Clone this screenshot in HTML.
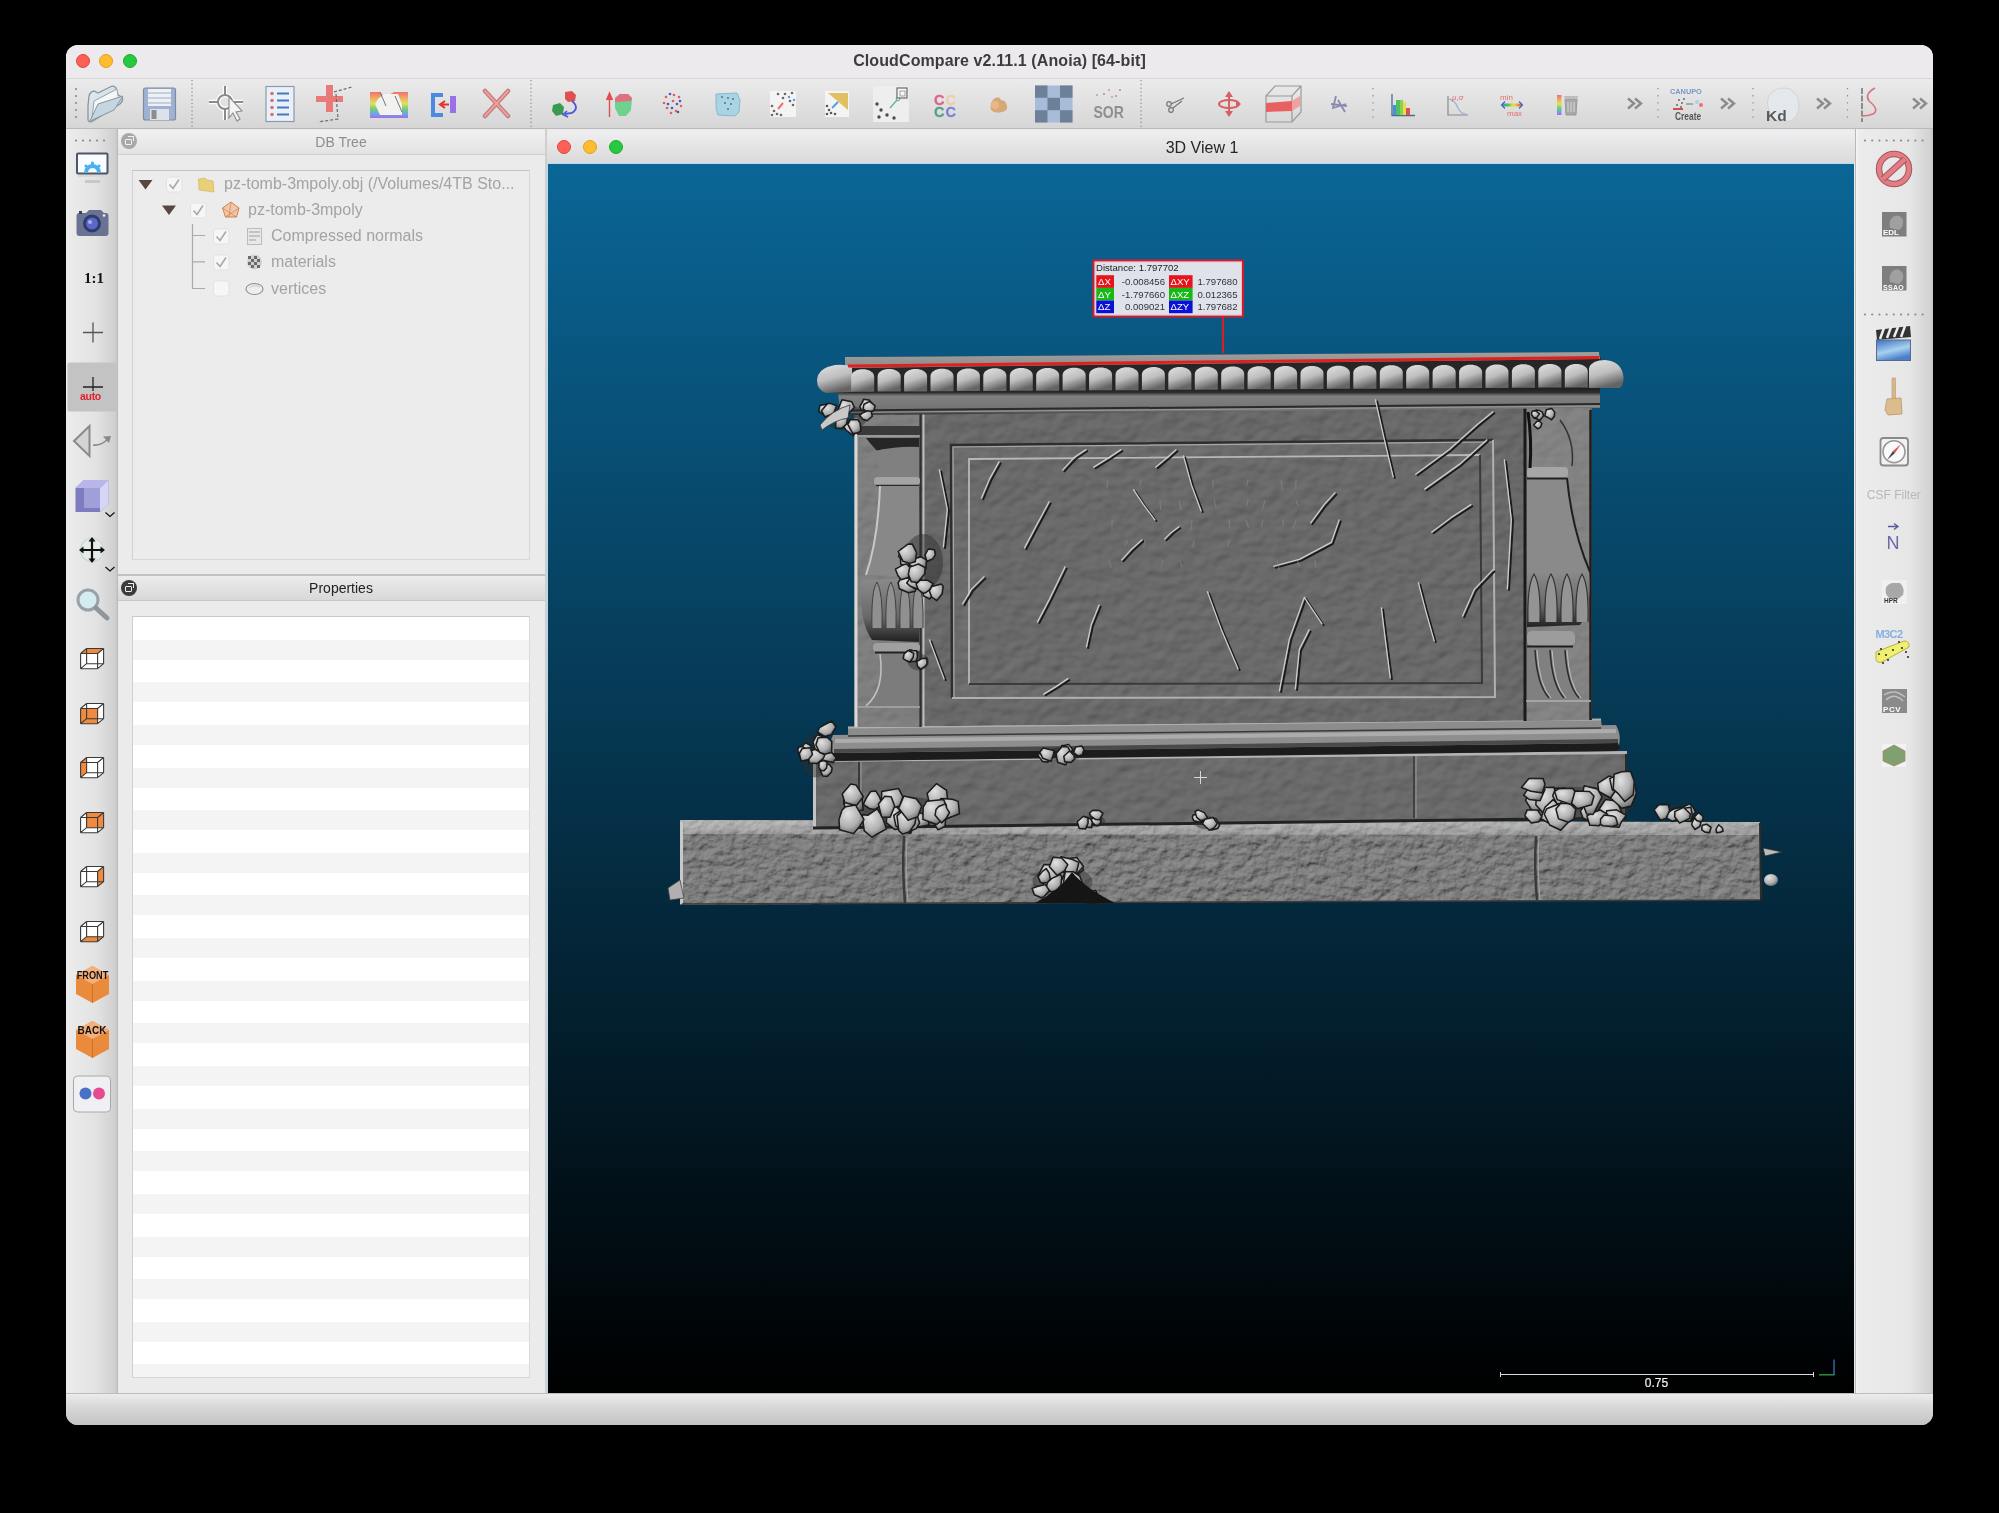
<!DOCTYPE html>
<html><head><meta charset="utf-8">
<style>
*{box-sizing:border-box;margin:0;padding:0}
html,body{width:1999px;height:1513px;overflow:hidden;background:#000;font-family:"Liberation Sans",sans-serif}
.a{position:absolute}
.hdr,#title .t,#vt .a{will-change:transform}
svg.a{will-change:transform}
#win{position:absolute;left:66px;top:45px;width:1867px;height:1380px;border-radius:12px;overflow:hidden;background:#ebebeb}
#title{left:0;top:0;width:1867px;height:34px;background:#eceaed;border-bottom:1px solid #d8d8d8}
#title .t{left:0;top:7px;width:1867px;text-align:center;font-size:16px;font-weight:bold;color:#3c3c3c;letter-spacing:0.1px}
.tl{position:absolute;width:14px;height:14px;border-radius:50%}
#tb{left:0;top:34px;width:1867px;height:50px;background:linear-gradient(#ebebeb,#d6d6d6);border-bottom:1px solid #b9b9b9}
#ltb{left:0;top:84px;width:52px;height:1264px;background:linear-gradient(90deg,#ececec 0%,#e2e2e2 60%,#cfcfcf 95%,#b8b8b8 100%)}
#rtb{left:1790px;top:84px;width:77px;height:1264px;background:linear-gradient(90deg,#f6f6f6 0,#ececec 3px,#e6e6e6 70%,#d2d2d2 96%,#c4c4c4 100%)}
#dock{left:52px;top:84px;width:427px;height:1264px;background:#ebebeb}
#status{left:0;top:1348px;width:1867px;height:32px;background:linear-gradient(#ececec,#d9d9d9 40%,#c4c4c4);border-top:1px solid #bdbdbd}
.hdr{position:absolute;left:0;width:427px;height:25px;font-size:14px;text-align:center;line-height:24px;padding-left:19px}
#view{left:479px;top:84px;width:1311px;height:1264px;background:#ececec;border-left:2px solid #cfcfcf;border-right:1px solid #b8b8b8}
#vt{left:0;top:2px;width:1308px;height:32px;background:linear-gradient(#efeef0,#dadada);border-radius:6px 6px 0 0}
#gl{left:0;top:34px;width:1307px;height:1230px;border-top:1px solid #b8dcef;border-left:1px solid #b8dcef;background:linear-gradient(#0a6697,#000 100%)}
.tx{position:absolute;font-size:16px;line-height:16px;color:#a3a3a3;white-space:nowrap;will-change:transform}
</style></head>
<body>
<div id="root" style="position:absolute;left:0;top:0;width:1999px;height:1513px">
<div id="win">
  <div id="title" class="a">
    <div class="tl" style="left:10px;top:9px;background:#fe5f57;border:1px solid #e0443e"></div>
    <div class="tl" style="left:33px;top:9px;background:#febc2e;border:1px solid #dea123"></div>
    <div class="tl" style="left:57px;top:9px;background:#28c840;border:1px solid #1aab29"></div>
    <div class="a t">CloudCompare v2.11.1 (Anoia) [64-bit]</div>
  </div>
  <div id="tb" class="a"></div>
  <div id="ltb" class="a"></div>
  <div id="dock" class="a">
    <div class="hdr" style="top:1px;background:linear-gradient(#f1f1f1,#e3e3e3);color:#8e8e8e;border-bottom:1px solid #cfcfcf">DB Tree</div>
    <div class="a" style="left:3px;top:4px;width:16px;height:16px;border-radius:50%;background:#a8a8a8"></div>
    <div class="a" style="left:7px;top:10px;width:7px;height:6px;border:1.5px solid #f0f0f0;border-radius:1px"></div>
    <div class="a" style="left:10px;top:7px;width:6px;height:5px;border-top:1.5px solid #f0f0f0;border-right:1.5px solid #f0f0f0"></div>
    <div class="a" style="left:14px;top:41px;width:398px;height:390px;background:#ececec;border-top:1px solid #c4c4c4;border-left:1px solid #d0d0d0;border-right:1px solid #d8d8d8;border-bottom:1px solid #d8d8d8"></div>
    <div class="a" style="left:0;top:445px;width:427px;height:2px;background:#c2c2c2"></div>
    <div class="hdr" style="top:447px;background:linear-gradient(#ececec,#d8d8d8);color:#222;border-bottom:1px solid #c8c8c8">Properties</div>
    <div class="a" style="left:3px;top:451px;width:16px;height:16px;border-radius:50%;background:#3c3c3c"></div>
    <div class="a" style="left:7px;top:457px;width:7px;height:6px;border:1.5px solid #f0f0f0;border-radius:1px"></div>
    <div class="a" style="left:10px;top:454px;width:6px;height:5px;border-top:1.5px solid #f0f0f0;border-right:1.5px solid #f0f0f0"></div>
    <div class="a" style="left:14px;top:487px;width:398px;height:762px;border-top:1px solid #c8c8c8;border-left:1px solid #d0d0d0;border-right:1px solid #dadada;border-bottom:1px solid #d4d4d4;background:repeating-linear-gradient(#fff 0,#fff 22.6px,#f4f4f4 22.6px,#f4f4f4 42.64px)"></div>
  </div>
  <div id="view" class="a">
    <div id="vt" class="a">
      <div class="tl" style="left:10px;top:9px;background:#fe5f57;border:1px solid #e0443e"></div>
      <div class="tl" style="left:36px;top:9px;background:#febc2e;border:1px solid #dea123"></div>
      <div class="tl" style="left:62px;top:9px;background:#28c840;border:1px solid #1aab29"></div>
      <div class="a" style="left:0;top:7.5px;width:1310px;text-align:center;font-size:16px;color:#262626">3D View 1</div>
    </div>
    <div id="gl" class="a"></div>
  </div>
  <div id="rtb" class="a"></div>
  <div id="status" class="a"></div>
</div>
  <div class="tree a" style="left:0;top:0">
    <div class="tx" style="left:224px;top:176.3px">pz-tomb-3mpoly.obj (/Volumes/4TB Sto...</div>
    <div class="tx" style="left:247.5px;top:202.3px">pz-tomb-3mpoly</div>
    <div class="tx" style="left:271px;top:228px">Compressed normals</div>
    <div class="tx" style="left:271px;top:254.3px">materials</div>
    <div class="tx" style="left:271px;top:280.5px">vertices</div>
  </div>
<svg class="a" style="left:0;top:0" width="1999" height="1513" viewBox="0 0 1999 1513">
<defs>
<linearGradient id="gTop" x1="0" y1="0" x2="0" y2="1"><stop offset="0" stop-color="#a0a0a0"/><stop offset="1" stop-color="#8a8a8a"/></linearGradient>
<linearGradient id="gLobe" x1="0" y1="0" x2="0.35" y2="1"><stop offset="0" stop-color="#e2e2e2"/><stop offset="0.55" stop-color="#bebebe"/><stop offset="1" stop-color="#646464"/></linearGradient>
<linearGradient id="gTorus" x1="0" y1="0" x2="0" y2="1"><stop offset="0" stop-color="#8c8c8c"/><stop offset="0.35" stop-color="#9c9c9c"/><stop offset="0.62" stop-color="#6a6a6a"/><stop offset="0.8" stop-color="#262626"/><stop offset="1" stop-color="#141414"/></linearGradient>
<linearGradient id="gBaseTop" x1="0" y1="0" x2="0" y2="1"><stop offset="0" stop-color="#b4b4b4"/><stop offset="1" stop-color="#989898"/></linearGradient>
<linearGradient id="gArch" x1="0" y1="0" x2="0" y2="1"><stop offset="0" stop-color="#161616"/><stop offset="0.22" stop-color="#2e2e2e"/><stop offset="0.35" stop-color="#808080"/><stop offset="0.85" stop-color="#727272"/><stop offset="1" stop-color="#2a2a2a"/></linearGradient>
<linearGradient id="gVaseL" x1="0" y1="0" x2="0" y2="1"><stop offset="0" stop-color="#8a8a8a"/><stop offset="0.6" stop-color="#6a6a6a"/><stop offset="1" stop-color="#202020"/></linearGradient>
<radialGradient id="gDeb" cx="0.35" cy="0.3" r="0.85"><stop offset="0" stop-color="#e2e2e2"/><stop offset="0.55" stop-color="#b0b0b0"/><stop offset="1" stop-color="#505050"/></radialGradient>
<filter id="rough" x="-2%" y="-2%" width="104%" height="104%">
  <feTurbulence type="fractalNoise" baseFrequency="0.09 0.11" numOctaves="4" seed="11" result="noise"/>
  <feDiffuseLighting in="noise" lighting-color="#fff" surfaceScale="1.9" diffuseConstant="1" result="light"><feDistantLight azimuth="235" elevation="55"/></feDiffuseLighting>
  <feComposite in="SourceGraphic" in2="light" operator="arithmetic" k1="0" k2="1" k3="0.45" k4="-0.36" result="comb"/>
  <feComposite in="comb" in2="SourceGraphic" operator="in"/>
</filter>
<filter id="smooth" x="-2%" y="-2%" width="104%" height="104%">
  <feTurbulence type="fractalNoise" baseFrequency="0.06 0.08" numOctaves="2" seed="5" result="noise"/>
  <feDiffuseLighting in="noise" lighting-color="#fff" surfaceScale="1.6" diffuseConstant="1" result="light"><feDistantLight azimuth="235" elevation="60"/></feDiffuseLighting>
  <feComposite in="SourceGraphic" in2="light" operator="arithmetic" k1="0" k2="1" k3="0.22" k4="-0.19" result="comb"/>
  <feComposite in="comb" in2="SourceGraphic" operator="in"/>
</filter>
<filter id="soft" x="-5%" y="-5%" width="110%" height="110%"><feGaussianBlur stdDeviation="0.55"/></filter>
</defs>
<g filter="url(#rough)">
<polygon points="680.0,820.0 1760.0,822.0 1762.0,900.0 680.0,905.0" fill="#7a7a7a"/>
<polygon points="680.0,820.0 1760.0,822.0 1760.0,835.0 680.0,834.0" fill="url(#gBaseTop)"/>
</g>
<line x1="681.5" y1="822" x2="681.5" y2="904" stroke="#c8c8c8" stroke-width="3"/>
<path d="M904,836 Q902,870 905,903" stroke="#3a3a3a" stroke-width="2.5" fill="none"/><path d="M907,838 Q905,870 908,902" stroke="#a0a0a0" stroke-width="1.2" fill="none"/>
<path d="M1536,836 Q1534,868 1537,900" stroke="#3a3a3a" stroke-width="2.5" fill="none"/><path d="M1539,836 Q1537,868 1540,900" stroke="#a0a0a0" stroke-width="1.2" fill="none"/>
<line x1="1760" y1="823" x2="1761" y2="900" stroke="#2a2a2a" stroke-width="2"/>
<line x1="682" y1="904" x2="1760" y2="900" stroke="#3a3a3a" stroke-width="1.5"/>
<g filter="url(#smooth)">
<polygon points="813.0,760.0 1627.0,752.0 1627.0,818.0 813.0,829.0" fill="#6a6a6a"/>
</g>
<line x1="814.5" y1="761" x2="814.5" y2="828" stroke="#c4c4c4" stroke-width="3"/>
<line x1="1626" y1="753" x2="1626" y2="818" stroke="#2a2a2a" stroke-width="2"/>
<line x1="859" y1="762" x2="859" y2="828" stroke="#333" stroke-width="1.8"/><line x1="861" y1="762" x2="861" y2="828" stroke="#9a9a9a" stroke-width="1"/>
<line x1="1414" y1="755" x2="1414" y2="818" stroke="#383838" stroke-width="1.6"/><line x1="1416" y1="755" x2="1416" y2="818" stroke="#9a9a9a" stroke-width="1"/>
<line x1="813" y1="760.5" x2="1627" y2="752.5" stroke="#b4b4b4" stroke-width="3"/>
<line x1="813" y1="828" x2="1627" y2="818" stroke="#222" stroke-width="3"/>
<path d="M833,735 L1616,725 Q1623,738 1617,751 L835,761 Q826,748 833,735 Z" fill="#8e8e8e"/>
<polygon points="848,727 1601,719 1602,728 848,737" fill="#8c8c8c"/>
<line x1="848" y1="727.5" x2="1601" y2="719.5" stroke="#b0b0b0" stroke-width="2"/>
<line x1="848" y1="736" x2="1601" y2="728" stroke="#3a3a3a" stroke-width="1.5"/>
<line x1="835" y1="741" x2="1616" y2="731" stroke="#acacac" stroke-width="4"/>
<polygon points="834,753 1618,743 1620,748 1617,751 835,761 829,757" fill="#1c1c1c"/>
<polygon points="834,749 1618,739 1618,743 834,753" fill="#4a4a4a"/>
<g filter="url(#smooth)">
<polygon points="854.0,414.0 1592.0,407.0 1592.0,720.0 854.0,727.0" fill="#686868"/>
<polygon points="856.0,414.0 921.0,413.0 921.0,727.0 856.0,727.0" fill="#7e7e7e"/>
<polygon points="1526.0,408.0 1590.0,407.0 1590.0,720.0 1526.0,721.0" fill="#828282"/>
<polygon points="951.0,445.0 1493.0,440.0 1495.0,697.0 952.0,698.0" fill="#6c6c6c"/>
<polygon points="969.0,459.0 1480.0,455.0 1482.0,683.0 969.0,684.0" fill="#696969"/>
</g>
<line x1="856" y1="418" x2="856" y2="727" stroke="#d8d8d8" stroke-width="3"/>
<line x1="1590.5" y1="410" x2="1590.5" y2="720" stroke="#1e1e1e" stroke-width="2.5"/>
<line x1="923.5" y1="414" x2="923.5" y2="727" stroke="#bcbcbc" stroke-width="2"/>
<line x1="920.5" y1="414" x2="920.5" y2="727" stroke="#2e2e2e" stroke-width="2.2"/>
<line x1="1525" y1="408" x2="1525" y2="721" stroke="#1a1a1a" stroke-width="3"/>
<polyline points="952.0,698.0 951.0,445.0 1493.0,440.0" fill="none" stroke="#2e2e2e" stroke-width="2.5"/>
<polyline points="954.0,697.0 953.0,447.0 1492.0,442.0" fill="none" stroke="#a8a8a8" stroke-width="1.2"/>
<polyline points="1493.0,440.0 1495.0,697.0 952.0,698.0" fill="none" stroke="#b0b0b0" stroke-width="2"/>
<polyline points="969.0,684.0 969.0,459.0 1480.0,455.0" fill="none" stroke="#b8b8b8" stroke-width="1.8"/>
<polyline points="1480.0,455.0 1482.0,683.0 969.0,684.0" fill="none" stroke="#3a3a3a" stroke-width="2"/>
<rect x="857" y="426" width="63" height="9" fill="#3a3a3a"/><line x1="857" y1="436" x2="920" y2="436" stroke="#a0a0a0" stroke-width="1.5"/>
<path d="M866,438 L919,438 L919,450 Q898,447 882,456 Q872,446 866,438 Z" fill="#262626"/>
<path d="M870,452 Q893,446 919,447 L919,478 L880,479 Q882,465 870,452 Z" fill="#808080"/>
<rect x="874" y="477" width="46" height="8" rx="3.5" fill="#a4a4a4"/><line x1="876" y1="485.5" x2="919" y2="485.5" stroke="#2a2a2a" stroke-width="1.5"/>
<path d="M880,486 Q878,540 866,575 L919,577 L919,486 Z" fill="#888888"/>
<path d="M880,486 Q878,540 866,575" stroke="#c8c8c8" stroke-width="2" fill="none"/>
<path d="M862,580 Q858,620 872,640 L919,642 L919,578 Z" fill="url(#gVaseL)"/>
<path d="M872,628 Q871,590 877,582 Q883,592 882,628" fill="#909090" stroke="#404040" stroke-width="1"/>
<path d="M886,628 Q885,590 891,582 Q897,592 896,628" fill="#909090" stroke="#404040" stroke-width="1"/>
<path d="M900,628 Q899,590 905,582 Q911,592 910,628" fill="#909090" stroke="#404040" stroke-width="1"/>
<path d="M913,628 Q912,590 918,582 Q924,592 923,628" fill="#909090" stroke="#404040" stroke-width="1"/>
<rect x="873" y="643" width="47" height="9" rx="4" fill="#a0a0a0"/><line x1="875" y1="652.5" x2="919" y2="652.5" stroke="#222" stroke-width="1.8"/>
<path d="M880,654 Q885,690 866,706 L919,706 L919,654 Z" fill="#7c7c7c"/>
<path d="M880,654 Q885,690 866,706" stroke="#c0c0c0" stroke-width="1.6" fill="none"/>
<line x1="858" y1="707" x2="920" y2="707" stroke="#a8a8a8" stroke-width="1.5"/>
<path d="M1527,472 L1567,471 Q1570,520 1589,570 L1589,576 L1527,577 Z" fill="#8a8a8a"/>
<path d="M1567,478 Q1572,530 1590,572" stroke="#1e1e1e" stroke-width="2" fill="none"/>
<rect x="1527" y="467" width="41" height="11" rx="4" fill="#a6a6a6"/><line x1="1527" y1="478.5" x2="1567" y2="478.5" stroke="#222" stroke-width="1.8"/>
<path d="M1528,412 Q1532,440 1530,468" stroke="#111" stroke-width="3" fill="none"/>
<path d="M1560,420 Q1575,440 1572,466" stroke="#333" stroke-width="1.5" fill="none"/>
<path d="M1527,573 L1589,572 Q1592,610 1580,625 L1527,627 Z" fill="url(#gVaseL)"/>
<path d="M1528,622 Q1527,585 1534,574 Q1541,585 1540,622" fill="#949494" stroke="#333" stroke-width="1.2"/>
<path d="M1545,622 Q1544,585 1551,574 Q1558,585 1557,622" fill="#949494" stroke="#333" stroke-width="1.2"/>
<path d="M1561,622 Q1560,585 1567,574 Q1574,585 1573,622" fill="#949494" stroke="#333" stroke-width="1.2"/>
<path d="M1576,622 Q1575,585 1582,574 Q1589,585 1588,622" fill="#949494" stroke="#333" stroke-width="1.2"/>
<rect x="1527" y="631" width="48" height="15" rx="5" fill="#9c9c9c"/><line x1="1527" y1="646.5" x2="1573" y2="646.5" stroke="#1e1e1e" stroke-width="2.2"/>
<path d="M1527,648 L1565,648 Q1568,690 1590,700 L1590,702 L1527,702 Z" fill="#808080"/>
<path d="M1535,650 Q1537,685 1549,698" stroke="#2a2a2a" stroke-width="1.5" fill="none"/><path d="M1537,650 Q1539,685 1551,698" stroke="#c0c0c0" stroke-width="1" fill="none"/>
<path d="M1550,650 Q1552,685 1564,698" stroke="#2a2a2a" stroke-width="1.5" fill="none"/><path d="M1552,650 Q1554,685 1566,698" stroke="#c0c0c0" stroke-width="1" fill="none"/>
<path d="M1565,650 Q1567,685 1579,698" stroke="#2a2a2a" stroke-width="1.5" fill="none"/><path d="M1567,650 Q1569,685 1581,698" stroke="#c0c0c0" stroke-width="1" fill="none"/>
<line x1="1526" y1="701" x2="1591" y2="701" stroke="#b0b0b0" stroke-width="1.6"/>
<polygon points="838.0,392.0 1600.0,386.0 1600.0,408.0 856.0,415.0 840.0,413.0" fill="url(#gArch)"/>
<line x1="845" y1="410.5" x2="1600" y2="404" stroke="#2a2a2a" stroke-width="2"/>
<line x1="845" y1="412.5" x2="1600" y2="406" stroke="#9a9a9a" stroke-width="1"/>
<polygon points="845.0,357.0 1599.0,352.0 1601.0,360.0 1612.0,362.0 1620.0,388.0 826.0,393.0 830.0,368.0 845.0,366.0" fill="#262626"/>
<polygon points="845.0,357.0 1599.0,352.0 1600.0,359.0 845.0,368.0" fill="url(#gTop)"/>
<path d="M852,392 L826,393 Q817,390 817,380 Q818,368 835,365 Q848,364 852,368 Z" fill="url(#gLobe)"/>
<path d="M1589,388 L1589,368 Q1592,360 1605,360 Q1620,361 1623,374 Q1625,383 1620,388 Z" fill="url(#gLobe)"/>
<g fill="url(#gLobe)">
<path d="M851.2,391.8 L851.2,376.8 C851.2,366.8 874.2,366.8 874.2,376.8 L874.2,391.8 Z"/>
<path d="M877.6,391.6 L877.6,376.6 C877.6,366.6 900.7,366.6 900.7,376.6 L900.7,391.6 Z"/>
<path d="M904.1,391.5 L904.1,376.4 C904.1,366.4 927.1,366.4 927.1,376.4 L927.1,391.5 Z"/>
<path d="M930.5,391.3 L930.5,376.2 C930.5,366.2 953.5,366.2 953.5,376.2 L953.5,391.3 Z"/>
<path d="M956.9,391.1 L956.9,376.0 C956.9,366.0 979.9,366.0 979.9,376.0 L979.9,391.1 Z"/>
<path d="M983.3,391.0 L983.3,375.8 C983.3,365.8 1006.4,365.8 1006.4,375.8 L1006.4,391.0 Z"/>
<path d="M1009.8,390.8 L1009.8,375.6 C1009.8,365.6 1032.8,365.6 1032.8,375.6 L1032.8,390.8 Z"/>
<path d="M1036.2,390.7 L1036.2,375.4 C1036.2,365.4 1059.2,365.4 1059.2,375.4 L1059.2,390.7 Z"/>
<path d="M1062.6,390.5 L1062.6,375.2 C1062.6,365.2 1085.7,365.2 1085.7,375.2 L1085.7,390.5 Z"/>
<path d="M1089.1,390.3 L1089.1,375.0 C1089.1,365.0 1112.1,365.0 1112.1,375.0 L1112.1,390.3 Z"/>
<path d="M1115.5,390.2 L1115.5,374.8 C1115.5,364.8 1138.5,364.8 1138.5,374.8 L1138.5,390.2 Z"/>
<path d="M1141.9,390.0 L1141.9,374.6 C1141.9,364.6 1164.9,364.6 1164.9,374.6 L1164.9,390.0 Z"/>
<path d="M1168.3,389.8 L1168.3,374.4 C1168.3,364.4 1191.4,364.4 1191.4,374.4 L1191.4,389.8 Z"/>
<path d="M1194.8,389.7 L1194.8,374.2 C1194.8,364.2 1217.8,364.2 1217.8,374.2 L1217.8,389.7 Z"/>
<path d="M1221.2,389.5 L1221.2,374.0 C1221.2,364.0 1244.2,364.0 1244.2,374.0 L1244.2,389.5 Z"/>
<path d="M1247.6,389.3 L1247.6,373.8 C1247.6,363.8 1270.7,363.8 1270.7,373.8 L1270.7,389.3 Z"/>
<path d="M1274.1,389.2 L1274.1,373.6 C1274.1,363.6 1297.1,363.6 1297.1,373.6 L1297.1,389.2 Z"/>
<path d="M1300.5,389.0 L1300.5,373.4 C1300.5,363.4 1323.5,363.4 1323.5,373.4 L1323.5,389.0 Z"/>
<path d="M1326.9,388.8 L1326.9,373.2 C1326.9,363.2 1349.9,363.2 1349.9,373.2 L1349.9,388.8 Z"/>
<path d="M1353.3,388.7 L1353.3,373.0 C1353.3,363.0 1376.4,363.0 1376.4,373.0 L1376.4,388.7 Z"/>
<path d="M1379.8,388.5 L1379.8,372.8 C1379.8,362.8 1402.8,362.8 1402.8,372.8 L1402.8,388.5 Z"/>
<path d="M1406.2,388.4 L1406.2,372.6 C1406.2,362.6 1429.2,362.6 1429.2,372.6 L1429.2,388.4 Z"/>
<path d="M1432.6,388.2 L1432.6,372.4 C1432.6,362.4 1455.7,362.4 1455.7,372.4 L1455.7,388.2 Z"/>
<path d="M1459.1,388.0 L1459.1,372.2 C1459.1,362.2 1482.1,362.2 1482.1,372.2 L1482.1,388.0 Z"/>
<path d="M1485.5,387.9 L1485.5,372.0 C1485.5,362.0 1508.5,362.0 1508.5,372.0 L1508.5,387.9 Z"/>
<path d="M1511.9,387.7 L1511.9,371.8 C1511.9,361.8 1534.9,361.8 1534.9,371.8 L1534.9,387.7 Z"/>
<path d="M1538.3,387.5 L1538.3,371.6 C1538.3,361.6 1561.4,361.6 1561.4,371.6 L1561.4,387.5 Z"/>
<path d="M1564.8,387.4 L1564.8,371.4 C1564.8,361.4 1587.8,361.4 1587.8,371.4 L1587.8,387.4 Z"/>
</g>
<path d="M1025,549 L1035,530 L1050,502" stroke="#1a1a1a" stroke-width="1.9" fill="none" stroke-linejoin="round" transform="translate(1,0.8)"/><path d="M1025,549 L1035,530 L1050,502" stroke="#cdcdcd" stroke-width="1.3" fill="none" stroke-linejoin="round" transform="translate(-0.7,-0.6)"/>
<path d="M1038,623 L1050,600 L1066,567" stroke="#1a1a1a" stroke-width="1.9" fill="none" stroke-linejoin="round" transform="translate(1,0.8)"/><path d="M1038,623 L1050,600 L1066,567" stroke="#cdcdcd" stroke-width="1.3" fill="none" stroke-linejoin="round" transform="translate(-0.7,-0.6)"/>
<path d="M982,499 L990,480 L1000,462" stroke="#1a1a1a" stroke-width="1.9" fill="none" stroke-linejoin="round" transform="translate(1,0.8)"/><path d="M982,499 L990,480 L1000,462" stroke="#cdcdcd" stroke-width="1.3" fill="none" stroke-linejoin="round" transform="translate(-0.7,-0.6)"/>
<path d="M1063,471 L1075,458 L1087,450" stroke="#1a1a1a" stroke-width="1.9" fill="none" stroke-linejoin="round" transform="translate(1,0.8)"/><path d="M1063,471 L1075,458 L1087,450" stroke="#cdcdcd" stroke-width="1.3" fill="none" stroke-linejoin="round" transform="translate(-0.7,-0.6)"/>
<path d="M1094,468 L1110,458 L1122,450" stroke="#1a1a1a" stroke-width="1.9" fill="none" stroke-linejoin="round" transform="translate(1,0.8)"/><path d="M1094,468 L1110,458 L1122,450" stroke="#cdcdcd" stroke-width="1.3" fill="none" stroke-linejoin="round" transform="translate(-0.7,-0.6)"/>
<path d="M1156,521 L1144,505 L1134,490" stroke="#1a1a1a" stroke-width="1.9" fill="none" stroke-linejoin="round" transform="translate(1,0.8)"/><path d="M1156,521 L1144,505 L1134,490" stroke="#cdcdcd" stroke-width="1.3" fill="none" stroke-linejoin="round" transform="translate(-0.7,-0.6)"/>
<path d="M1156,468 L1168,458 L1177,450" stroke="#1a1a1a" stroke-width="1.9" fill="none" stroke-linejoin="round" transform="translate(1,0.8)"/><path d="M1156,468 L1168,458 L1177,450" stroke="#cdcdcd" stroke-width="1.3" fill="none" stroke-linejoin="round" transform="translate(-0.7,-0.6)"/>
<path d="M1184,456 L1192,485 L1202,512" stroke="#1a1a1a" stroke-width="1.9" fill="none" stroke-linejoin="round" transform="translate(1,0.8)"/><path d="M1184,456 L1192,485 L1202,512" stroke="#cdcdcd" stroke-width="1.3" fill="none" stroke-linejoin="round" transform="translate(-0.7,-0.6)"/>
<path d="M1208,592 L1222,630 L1239,670" stroke="#1a1a1a" stroke-width="1.9" fill="none" stroke-linejoin="round" transform="translate(1,0.8)"/><path d="M1208,592 L1222,630 L1239,670" stroke="#cdcdcd" stroke-width="1.3" fill="none" stroke-linejoin="round" transform="translate(-0.7,-0.6)"/>
<path d="M1280,692 L1290,640 L1305,598 L1323,625" stroke="#1a1a1a" stroke-width="1.9" fill="none" stroke-linejoin="round" transform="translate(1,0.8)"/><path d="M1280,692 L1290,640 L1305,598 L1323,625" stroke="#cdcdcd" stroke-width="1.3" fill="none" stroke-linejoin="round" transform="translate(-0.7,-0.6)"/>
<path d="M1296,690 L1300,650 L1310,630" stroke="#1a1a1a" stroke-width="1.9" fill="none" stroke-linejoin="round" transform="translate(1,0.8)"/><path d="M1296,690 L1300,650 L1310,630" stroke="#cdcdcd" stroke-width="1.3" fill="none" stroke-linejoin="round" transform="translate(-0.7,-0.6)"/>
<path d="M1311,524 L1325,505 L1336,493" stroke="#1a1a1a" stroke-width="1.9" fill="none" stroke-linejoin="round" transform="translate(1,0.8)"/><path d="M1311,524 L1325,505 L1336,493" stroke="#cdcdcd" stroke-width="1.3" fill="none" stroke-linejoin="round" transform="translate(-0.7,-0.6)"/>
<path d="M1274,567 L1300,560 L1332,543 L1340,520" stroke="#1a1a1a" stroke-width="1.9" fill="none" stroke-linejoin="round" transform="translate(1,0.8)"/><path d="M1274,567 L1300,560 L1332,543 L1340,520" stroke="#cdcdcd" stroke-width="1.3" fill="none" stroke-linejoin="round" transform="translate(-0.7,-0.6)"/>
<path d="M1416,475 L1450,450 L1478,425 L1494,412" stroke="#1a1a1a" stroke-width="1.9" fill="none" stroke-linejoin="round" transform="translate(1,0.8)"/><path d="M1416,475 L1450,450 L1478,425 L1494,412" stroke="#cdcdcd" stroke-width="1.3" fill="none" stroke-linejoin="round" transform="translate(-0.7,-0.6)"/>
<path d="M1425,490 L1460,465 L1488,440" stroke="#1a1a1a" stroke-width="1.9" fill="none" stroke-linejoin="round" transform="translate(1,0.8)"/><path d="M1425,490 L1460,465 L1488,440" stroke="#cdcdcd" stroke-width="1.3" fill="none" stroke-linejoin="round" transform="translate(-0.7,-0.6)"/>
<path d="M1432,533 L1452,518 L1472,505" stroke="#1a1a1a" stroke-width="1.9" fill="none" stroke-linejoin="round" transform="translate(1,0.8)"/><path d="M1432,533 L1452,518 L1472,505" stroke="#cdcdcd" stroke-width="1.3" fill="none" stroke-linejoin="round" transform="translate(-0.7,-0.6)"/>
<path d="M1463,617 L1475,590 L1494,570" stroke="#1a1a1a" stroke-width="1.9" fill="none" stroke-linejoin="round" transform="translate(1,0.8)"/><path d="M1463,617 L1475,590 L1494,570" stroke="#cdcdcd" stroke-width="1.3" fill="none" stroke-linejoin="round" transform="translate(-0.7,-0.6)"/>
<path d="M1376,400 L1385,440 L1394,478" stroke="#1a1a1a" stroke-width="1.9" fill="none" stroke-linejoin="round" transform="translate(1,0.8)"/><path d="M1376,400 L1385,440 L1394,478" stroke="#cdcdcd" stroke-width="1.3" fill="none" stroke-linejoin="round" transform="translate(-0.7,-0.6)"/>
<path d="M1382,608 L1386,640 L1391,679" stroke="#1a1a1a" stroke-width="1.9" fill="none" stroke-linejoin="round" transform="translate(1,0.8)"/><path d="M1382,608 L1386,640 L1391,679" stroke="#cdcdcd" stroke-width="1.3" fill="none" stroke-linejoin="round" transform="translate(-0.7,-0.6)"/>
<path d="M1419,583 L1426,610 L1435,642" stroke="#1a1a1a" stroke-width="1.9" fill="none" stroke-linejoin="round" transform="translate(1,0.8)"/><path d="M1419,583 L1426,610 L1435,642" stroke="#cdcdcd" stroke-width="1.3" fill="none" stroke-linejoin="round" transform="translate(-0.7,-0.6)"/>
<path d="M1087,648 L1092,625 L1100,605" stroke="#1a1a1a" stroke-width="1.9" fill="none" stroke-linejoin="round" transform="translate(1,0.8)"/><path d="M1087,648 L1092,625 L1100,605" stroke="#cdcdcd" stroke-width="1.3" fill="none" stroke-linejoin="round" transform="translate(-0.7,-0.6)"/>
<path d="M1122,561 L1132,550 L1143,540" stroke="#1a1a1a" stroke-width="1.9" fill="none" stroke-linejoin="round" transform="translate(1,0.8)"/><path d="M1122,561 L1132,550 L1143,540" stroke="#cdcdcd" stroke-width="1.3" fill="none" stroke-linejoin="round" transform="translate(-0.7,-0.6)"/>
<path d="M1165,540 L1172,533 L1180,527" stroke="#1a1a1a" stroke-width="1.9" fill="none" stroke-linejoin="round" transform="translate(1,0.8)"/><path d="M1165,540 L1172,533 L1180,527" stroke="#cdcdcd" stroke-width="1.3" fill="none" stroke-linejoin="round" transform="translate(-0.7,-0.6)"/>
<path d="M963,605 L972,590 L985,577" stroke="#1a1a1a" stroke-width="1.9" fill="none" stroke-linejoin="round" transform="translate(1,0.8)"/><path d="M963,605 L972,590 L985,577" stroke="#cdcdcd" stroke-width="1.3" fill="none" stroke-linejoin="round" transform="translate(-0.7,-0.6)"/>
<path d="M1044,695 L1057,687 L1069,679" stroke="#1a1a1a" stroke-width="1.9" fill="none" stroke-linejoin="round" transform="translate(1,0.8)"/><path d="M1044,695 L1057,687 L1069,679" stroke="#cdcdcd" stroke-width="1.3" fill="none" stroke-linejoin="round" transform="translate(-0.7,-0.6)"/>
<path d="M940,470 L948,510 L944,548" stroke="#1a1a1a" stroke-width="1.9" fill="none" stroke-linejoin="round" transform="translate(1,0.8)"/><path d="M940,470 L948,510 L944,548" stroke="#cdcdcd" stroke-width="1.3" fill="none" stroke-linejoin="round" transform="translate(-0.7,-0.6)"/>
<path d="M1505,460 L1512,520 L1508,590" stroke="#1a1a1a" stroke-width="1.9" fill="none" stroke-linejoin="round" transform="translate(1,0.8)"/><path d="M1505,460 L1512,520 L1508,590" stroke="#cdcdcd" stroke-width="1.3" fill="none" stroke-linejoin="round" transform="translate(-0.7,-0.6)"/>
<path d="M930,640 L945,680" stroke="#1a1a1a" stroke-width="1.9" fill="none" stroke-linejoin="round" transform="translate(1,0.8)"/><path d="M930,640 L945,680" stroke="#cdcdcd" stroke-width="1.3" fill="none" stroke-linejoin="round" transform="translate(-0.7,-0.6)"/>
<path d="M1108,480 l-0.8,8.4" stroke="#8a8a8a" stroke-width="1.1" opacity="0.6"/>
<path d="M1141,480 l-1.4,6.9" stroke="#8a8a8a" stroke-width="1.1" opacity="0.6"/>
<path d="M1213,480 l0.1,9.0" stroke="#8a8a8a" stroke-width="1.1" opacity="0.6"/>
<path d="M1248,480 l-1.2,6.1" stroke="#8a8a8a" stroke-width="1.1" opacity="0.6"/>
<path d="M1281,480 l1.3,9.7" stroke="#8a8a8a" stroke-width="1.1" opacity="0.6"/>
<path d="M1296,480 l-0.3,9.7" stroke="#8a8a8a" stroke-width="1.1" opacity="0.6"/>
<path d="M1160,500 l0.5,9.6" stroke="#8a8a8a" stroke-width="1.1" opacity="0.6"/>
<path d="M1179,500 l2.1,10.0" stroke="#8a8a8a" stroke-width="1.1" opacity="0.6"/>
<path d="M1214,500 l2.4,8.3" stroke="#8a8a8a" stroke-width="1.1" opacity="0.6"/>
<path d="M1248,500 l-1.3,6.3" stroke="#8a8a8a" stroke-width="1.1" opacity="0.6"/>
<path d="M1265,500 l-2.5,9.2" stroke="#8a8a8a" stroke-width="1.1" opacity="0.6"/>
<path d="M1296,500 l2.2,6.2" stroke="#8a8a8a" stroke-width="1.1" opacity="0.6"/>
<path d="M1112,520 l0.0,10.0" stroke="#8a8a8a" stroke-width="1.1" opacity="0.6"/>
<path d="M1192,520 l-1.1,9.8" stroke="#8a8a8a" stroke-width="1.1" opacity="0.6"/>
<path d="M1229,520 l0.9,8.4" stroke="#8a8a8a" stroke-width="1.1" opacity="0.6"/>
<path d="M1246,520 l2.6,8.0" stroke="#8a8a8a" stroke-width="1.1" opacity="0.6"/>
<path d="M1263,520 l-1.6,7.2" stroke="#8a8a8a" stroke-width="1.1" opacity="0.6"/>
<path d="M1283,520 l0.3,6.0" stroke="#8a8a8a" stroke-width="1.1" opacity="0.6"/>
<path d="M1296,520 l-2.9,8.5" stroke="#8a8a8a" stroke-width="1.1" opacity="0.6"/>
<path d="M1128,540 l-2.9,6.2" stroke="#8a8a8a" stroke-width="1.1" opacity="0.6"/>
<path d="M1145,540 l-1.5,7.8" stroke="#8a8a8a" stroke-width="1.1" opacity="0.6"/>
<path d="M1194,540 l-1.2,7.5" stroke="#8a8a8a" stroke-width="1.1" opacity="0.6"/>
<path d="M1229,540 l-1.1,6.9" stroke="#8a8a8a" stroke-width="1.1" opacity="0.6"/>
<path d="M1109,560 l2.3,7.8" stroke="#8a8a8a" stroke-width="1.1" opacity="0.6"/>
<path d="M1163,560 l-1.9,7.1" stroke="#8a8a8a" stroke-width="1.1" opacity="0.6"/>
<path d="M1180,560 l1.8,7.4" stroke="#8a8a8a" stroke-width="1.1" opacity="0.6"/>
<path d="M1277,560 l2.3,9.9" stroke="#8a8a8a" stroke-width="1.1" opacity="0.6"/>
<path d="M1297,560 l2.6,6.9" stroke="#8a8a8a" stroke-width="1.1" opacity="0.6"/>
<path d="M1315,560 l1.0,8.1" stroke="#8a8a8a" stroke-width="1.1" opacity="0.6"/>
<g filter="url(#soft)">
<ellipse cx="902.0" cy="812.0" rx="48.0" ry="15.4" fill="#2a2a2a" opacity="0.45"/>
<polygon points="938.1,829.8 933.6,823.0 933.7,813.4 939.4,811.6 945.9,817.8 945.0,826.3" fill="url(#gDeb)" stroke="#1a1a1a" stroke-width="1.5" stroke-linejoin="round"/>
<polygon points="929.0,824.9 922.0,826.3 917.1,827.3 905.9,822.3 906.5,815.7 912.8,812.4 920.0,812.9 927.9,816.1" fill="url(#gDeb)" stroke="#1a1a1a" stroke-width="1.5" stroke-linejoin="round"/>
<polygon points="894.4,829.4 886.3,822.7 887.1,812.7 894.4,804.6 903.8,814.6 903.9,828.8" fill="url(#gDeb)" stroke="#1a1a1a" stroke-width="1.5" stroke-linejoin="round"/>
<polygon points="886.5,828.8 876.4,834.5 871.9,837.3 864.3,830.9 862.0,814.7 868.1,815.2 877.1,808.9 882.1,816.5" fill="url(#gDeb)" stroke="#1a1a1a" stroke-width="1.5" stroke-linejoin="round"/>
<polygon points="910.6,833.4 905.1,832.0 897.3,824.3 900.9,821.0 910.1,820.7 913.9,825.8" fill="url(#gDeb)" stroke="#1a1a1a" stroke-width="1.5" stroke-linejoin="round"/>
<polygon points="850.8,813.0 843.9,803.7 844.0,797.3 845.9,793.8 854.7,792.8 859.7,796.5 861.0,801.3 857.5,809.4" fill="url(#gDeb)" stroke="#1a1a1a" stroke-width="1.5" stroke-linejoin="round"/>
<polygon points="874.6,809.6 869.9,808.8 863.3,804.4 866.1,798.4 870.6,791.5 875.9,791.1 879.5,796.9 882.5,804.7" fill="url(#gDeb)" stroke="#1a1a1a" stroke-width="1.5" stroke-linejoin="round"/>
<polygon points="944.6,819.5 935.3,818.9 928.6,812.1 932.8,805.8 939.5,804.7 946.8,808.1" fill="url(#gDeb)" stroke="#1a1a1a" stroke-width="1.5" stroke-linejoin="round"/>
<polygon points="929.9,805.2 927.1,793.5 936.6,783.6 946.6,790.4 948.1,803.8 941.6,808.4" fill="url(#gDeb)" stroke="#1a1a1a" stroke-width="1.5" stroke-linejoin="round"/>
<polygon points="940.8,817.6 936.7,809.6 940.8,798.4 952.5,799.3 958.2,801.4 959.6,813.8 946.5,818.7" fill="url(#gDeb)" stroke="#1a1a1a" stroke-width="1.5" stroke-linejoin="round"/>
<polygon points="906.9,832.3 901.2,827.8 901.7,817.0 909.6,812.8 917.7,817.3 919.6,822.9 916.4,828.6" fill="url(#gDeb)" stroke="#1a1a1a" stroke-width="1.5" stroke-linejoin="round"/>
<polygon points="850.7,812.2 844.7,809.4 843.5,794.2 854.3,790.0 861.7,794.2 863.2,810.0" fill="url(#gDeb)" stroke="#1a1a1a" stroke-width="1.5" stroke-linejoin="round"/>
<polygon points="906.9,826.5 902.1,824.2 897.5,816.5 901.4,809.5 907.3,807.2 914.9,812.4 914.5,819.9" fill="url(#gDeb)" stroke="#1a1a1a" stroke-width="1.5" stroke-linejoin="round"/>
<polygon points="903.3,831.2 895.9,825.9 893.7,815.3 899.8,811.1 908.6,812.1 909.9,825.5" fill="url(#gDeb)" stroke="#1a1a1a" stroke-width="1.5" stroke-linejoin="round"/>
<polygon points="842.2,794.0 850.7,784.0 856.2,785.1 863.3,796.7 856.3,805.7 844.8,802.5" fill="url(#gDeb)" stroke="#1a1a1a" stroke-width="1.5" stroke-linejoin="round"/>
<polygon points="881.5,800.5 881.7,791.6 898.5,788.4 902.9,796.8 899.7,805.9 891.5,808.3 884.0,810.6" fill="url(#gDeb)" stroke="#1a1a1a" stroke-width="1.5" stroke-linejoin="round"/>
<polygon points="902.6,834.1 898.8,830.7 897.0,815.9 901.7,811.4 908.2,808.2 916.0,817.2 915.0,823.8 909.4,831.7" fill="url(#gDeb)" stroke="#1a1a1a" stroke-width="1.5" stroke-linejoin="round"/>
<polygon points="908.1,820.3 898.7,808.2 903.8,796.1 916.2,798.7 921.7,806.0 917.9,816.6" fill="url(#gDeb)" stroke="#1a1a1a" stroke-width="1.5" stroke-linejoin="round"/>
<polygon points="839.0,819.5 842.1,809.9 845.6,806.8 855.6,805.1 864.0,819.7 859.6,826.5 853.6,833.6 839.6,829.7" fill="url(#gDeb)" stroke="#1a1a1a" stroke-width="1.5" stroke-linejoin="round"/>
<polygon points="936.8,824.5 922.9,819.4 923.2,807.2 926.8,801.2 943.5,799.4 946.5,805.8 944.8,817.1" fill="url(#gDeb)" stroke="#1a1a1a" stroke-width="1.5" stroke-linejoin="round"/>
<polygon points="941.6,822.9 935.1,815.2 936.0,809.5 938.7,806.5 945.5,803.9 946.8,808.3 949.6,812.6 946.0,818.6" fill="url(#gDeb)" stroke="#1a1a1a" stroke-width="1.5" stroke-linejoin="round"/>
<polygon points="881.6,816.9 878.4,803.9 884.8,796.2 891.2,796.8 894.7,806.2 890.2,817.3" fill="url(#gDeb)" stroke="#1a1a1a" stroke-width="1.5" stroke-linejoin="round"/>
<ellipse cx="815.5" cy="755.5" rx="14.8" ry="22.0" fill="#2a2a2a" opacity="0.45"/>
<polygon points="817.5,732.0 819.4,727.7 831.6,721.0 835.9,726.9 831.3,734.6 824.7,736.5" fill="url(#gDeb)" stroke="#1a1a1a" stroke-width="1.5" stroke-linejoin="round"/>
<polygon points="815.2,749.4 812.9,741.8 816.9,734.8 824.1,737.1 828.0,743.1 824.5,751.7" fill="url(#gDeb)" stroke="#1a1a1a" stroke-width="1.5" stroke-linejoin="round"/>
<polygon points="800.5,754.0 798.8,749.9 805.6,742.8 809.9,745.0 812.2,748.0 811.7,754.1 804.3,757.1" fill="url(#gDeb)" stroke="#1a1a1a" stroke-width="1.5" stroke-linejoin="round"/>
<polygon points="833.0,762.6 822.1,760.0 816.5,751.5 822.0,749.3 828.5,748.7 836.4,757.9" fill="url(#gDeb)" stroke="#1a1a1a" stroke-width="1.5" stroke-linejoin="round"/>
<polygon points="801.4,758.1 799.2,755.7 797.7,749.9 798.9,747.0 802.4,746.4 806.7,749.5 805.5,754.5" fill="url(#gDeb)" stroke="#1a1a1a" stroke-width="1.5" stroke-linejoin="round"/>
<polygon points="822.9,758.8 817.1,763.6 809.1,763.1 808.7,756.2 807.8,751.7 815.3,749.3 825.0,755.0" fill="url(#gDeb)" stroke="#1a1a1a" stroke-width="1.5" stroke-linejoin="round"/>
<polygon points="801.2,761.3 799.3,753.5 802.2,748.6 810.3,747.7 812.6,754.4 808.6,759.4" fill="url(#gDeb)" stroke="#1a1a1a" stroke-width="1.5" stroke-linejoin="round"/>
<polygon points="820.3,770.4 822.7,764.7 823.9,763.3 829.6,764.7 832.2,768.1 831.3,772.3 827.4,776.3 822.8,776.1" fill="url(#gDeb)" stroke="#1a1a1a" stroke-width="1.5" stroke-linejoin="round"/>
<polygon points="815.9,745.0 818.1,737.7 827.0,737.2 831.8,741.4 831.6,752.5 824.9,754.2 819.7,752.5" fill="url(#gDeb)" stroke="#1a1a1a" stroke-width="1.5" stroke-linejoin="round"/>
<polygon points="821.0,770.4 818.9,767.6 818.9,763.6 820.0,761.4 824.1,760.6 827.2,762.3 826.6,768.1 824.1,770.8" fill="url(#gDeb)" stroke="#1a1a1a" stroke-width="1.5" stroke-linejoin="round"/>
<ellipse cx="1064.0" cy="754.0" rx="19.2" ry="7.0" fill="#2a2a2a" opacity="0.45"/>
<polygon points="1062.1,756.9 1059.9,751.5 1061.8,745.6 1064.1,745.6 1068.8,744.6 1072.7,749.4 1069.8,755.0 1065.7,757.7" fill="url(#gDeb)" stroke="#1a1a1a" stroke-width="1.5" stroke-linejoin="round"/>
<polygon points="1047.8,762.3 1042.8,761.6 1038.7,756.5 1038.0,754.1 1043.3,752.5 1049.2,753.6 1049.8,758.5" fill="url(#gDeb)" stroke="#1a1a1a" stroke-width="1.5" stroke-linejoin="round"/>
<polygon points="1057.9,762.5 1056.6,757.0 1056.3,753.2 1062.1,746.5 1068.0,746.9 1070.5,752.2 1068.9,758.0 1065.8,765.0" fill="url(#gDeb)" stroke="#1a1a1a" stroke-width="1.5" stroke-linejoin="round"/>
<polygon points="1064.7,761.7 1063.8,756.2 1069.6,751.0 1073.9,755.2 1074.7,759.1 1071.1,762.4" fill="url(#gDeb)" stroke="#1a1a1a" stroke-width="1.5" stroke-linejoin="round"/>
<polygon points="1051.1,761.4 1042.8,758.3 1039.7,752.2 1043.1,748.0 1054.1,750.5 1053.5,754.6" fill="url(#gDeb)" stroke="#1a1a1a" stroke-width="1.5" stroke-linejoin="round"/>
<polygon points="1073.6,752.5 1075.6,747.1 1081.6,746.0 1084.0,749.4 1082.4,754.7 1078.3,756.0" fill="url(#gDeb)" stroke="#1a1a1a" stroke-width="1.5" stroke-linejoin="round"/>
<ellipse cx="1205.0" cy="822.0" rx="10.4" ry="7.0" fill="#2a2a2a" opacity="0.45"/>
<polygon points="1202.7,821.1 1199.7,822.3 1193.7,820.8 1192.4,817.4 1193.0,814.9 1198.5,814.3 1201.2,817.3" fill="url(#gDeb)" stroke="#1a1a1a" stroke-width="1.5" stroke-linejoin="round"/>
<polygon points="1217.7,828.6 1211.8,830.0 1207.1,824.8 1208.0,822.1 1213.3,818.6 1215.9,818.6 1219.7,825.2" fill="url(#gDeb)" stroke="#1a1a1a" stroke-width="1.5" stroke-linejoin="round"/>
<polygon points="1206.0,819.8 1200.5,820.6 1196.5,817.1 1195.1,811.5 1197.9,809.9 1204.3,812.6 1207.3,817.4" fill="url(#gDeb)" stroke="#1a1a1a" stroke-width="1.5" stroke-linejoin="round"/>
<polygon points="1213.7,828.3 1209.4,830.2 1202.5,823.7 1204.8,819.2 1213.1,817.4 1217.3,823.6" fill="url(#gDeb)" stroke="#1a1a1a" stroke-width="1.5" stroke-linejoin="round"/>
<ellipse cx="1093.0" cy="821.0" rx="12.0" ry="6.3" fill="#2a2a2a" opacity="0.45"/>
<polygon points="1100.9,822.4 1097.8,825.7 1094.6,824.6 1089.5,820.1 1093.0,818.3 1096.0,816.2 1100.8,818.7" fill="url(#gDeb)" stroke="#1a1a1a" stroke-width="1.5" stroke-linejoin="round"/>
<polygon points="1086.3,827.1 1082.6,822.8 1084.3,819.1 1090.2,818.2 1092.4,822.0 1091.6,827.7" fill="url(#gDeb)" stroke="#1a1a1a" stroke-width="1.5" stroke-linejoin="round"/>
<polygon points="1099.6,819.8 1095.7,819.6 1091.1,816.3 1089.3,813.2 1092.7,810.2 1099.3,810.4 1103.0,813.4" fill="url(#gDeb)" stroke="#1a1a1a" stroke-width="1.5" stroke-linejoin="round"/>
<polygon points="1079.2,828.4 1077.2,821.8 1083.4,816.2 1088.0,818.0 1088.1,823.3 1085.7,828.9" fill="url(#gDeb)" stroke="#1a1a1a" stroke-width="1.5" stroke-linejoin="round"/>
<ellipse cx="1587.0" cy="803.5" rx="48.0" ry="17.1" fill="#2a2a2a" opacity="0.45"/>
<polygon points="1600.4,816.1 1598.5,810.0 1605.4,799.6 1616.9,800.9 1621.8,812.6 1622.1,819.3 1613.9,826.8" fill="url(#gDeb)" stroke="#1a1a1a" stroke-width="1.5" stroke-linejoin="round"/>
<polygon points="1532.1,810.9 1525.6,800.3 1529.2,792.8 1535.5,787.3 1546.4,793.4 1556.2,798.5 1548.6,806.8 1538.3,810.6" fill="url(#gDeb)" stroke="#1a1a1a" stroke-width="1.5" stroke-linejoin="round"/>
<polygon points="1544.0,814.1 1535.8,804.8 1536.9,790.9 1542.1,787.4 1554.2,787.3 1555.9,795.5 1559.1,802.9 1551.0,814.6" fill="url(#gDeb)" stroke="#1a1a1a" stroke-width="1.5" stroke-linejoin="round"/>
<polygon points="1523.7,795.1 1530.5,785.4 1540.7,784.3 1545.0,789.4 1540.1,800.7 1529.2,799.5" fill="url(#gDeb)" stroke="#1a1a1a" stroke-width="1.5" stroke-linejoin="round"/>
<polygon points="1544.8,820.8 1540.8,818.3 1545.0,807.3 1553.1,799.6 1561.4,806.6 1558.1,816.6 1553.1,825.9" fill="url(#gDeb)" stroke="#1a1a1a" stroke-width="1.5" stroke-linejoin="round"/>
<polygon points="1538.9,821.7 1531.3,823.0 1524.7,815.8 1527.2,809.9 1537.3,809.9 1541.9,816.7" fill="url(#gDeb)" stroke="#1a1a1a" stroke-width="1.5" stroke-linejoin="round"/>
<polygon points="1621.9,808.3 1608.1,795.7 1611.8,783.2 1620.2,780.1 1634.6,783.9 1636.4,793.2 1631.3,806.0" fill="url(#gDeb)" stroke="#1a1a1a" stroke-width="1.5" stroke-linejoin="round"/>
<polygon points="1544.2,814.0 1546.7,808.8 1559.9,803.5 1570.7,814.6 1569.4,820.9 1560.8,830.3 1549.7,825.0" fill="url(#gDeb)" stroke="#1a1a1a" stroke-width="1.5" stroke-linejoin="round"/>
<polygon points="1574.7,805.5 1570.7,806.1 1556.8,803.6 1552.7,795.8 1555.6,788.3 1565.3,788.1 1575.0,791.1 1581.0,798.8" fill="url(#gDeb)" stroke="#1a1a1a" stroke-width="1.5" stroke-linejoin="round"/>
<polygon points="1559.7,811.1 1558.6,804.6 1560.8,802.7 1567.2,796.1 1570.7,799.7 1570.3,806.1 1570.2,809.6 1566.1,813.6" fill="url(#gDeb)" stroke="#1a1a1a" stroke-width="1.5" stroke-linejoin="round"/>
<polygon points="1568.4,822.4 1564.0,820.7 1558.5,818.9 1555.9,808.9 1560.7,803.2 1570.2,803.6 1575.8,809.3 1574.0,819.0" fill="url(#gDeb)" stroke="#1a1a1a" stroke-width="1.5" stroke-linejoin="round"/>
<polygon points="1617.2,788.3 1610.5,798.0 1598.8,791.5 1597.7,783.3 1609.5,775.9 1616.7,780.7" fill="url(#gDeb)" stroke="#1a1a1a" stroke-width="1.5" stroke-linejoin="round"/>
<polygon points="1622.6,794.7 1612.2,789.7 1609.7,778.6 1619.2,774.1 1631.8,779.5 1632.3,788.2" fill="url(#gDeb)" stroke="#1a1a1a" stroke-width="1.5" stroke-linejoin="round"/>
<polygon points="1521.4,787.5 1528.9,778.6 1543.1,778.5 1545.0,784.1 1542.4,793.0 1530.8,791.2" fill="url(#gDeb)" stroke="#1a1a1a" stroke-width="1.5" stroke-linejoin="round"/>
<polygon points="1619.1,827.2 1610.1,826.6 1605.7,819.3 1606.6,810.7 1616.6,809.8 1626.3,815.4 1621.2,822.1" fill="url(#gDeb)" stroke="#1a1a1a" stroke-width="1.5" stroke-linejoin="round"/>
<polygon points="1583.1,818.3 1580.3,810.9 1587.4,802.3 1595.7,807.1 1595.9,818.1 1589.2,820.6" fill="url(#gDeb)" stroke="#1a1a1a" stroke-width="1.5" stroke-linejoin="round"/>
<polygon points="1633.3,794.8 1624.7,801.6 1618.1,793.6 1613.2,789.0 1614.1,774.2 1621.8,771.7 1630.5,771.2 1634.3,781.3" fill="url(#gDeb)" stroke="#1a1a1a" stroke-width="1.5" stroke-linejoin="round"/>
<polygon points="1586.9,815.8 1593.0,812.5 1600.3,810.0 1607.6,814.4 1607.0,818.0 1598.9,825.7 1589.7,825.2" fill="url(#gDeb)" stroke="#1a1a1a" stroke-width="1.5" stroke-linejoin="round"/>
<polygon points="1576.0,799.3 1571.5,804.7 1557.2,799.6 1554.6,791.4 1558.5,788.8 1572.5,788.2 1574.9,791.1" fill="url(#gDeb)" stroke="#1a1a1a" stroke-width="1.5" stroke-linejoin="round"/>
<polygon points="1617.9,824.7 1611.6,826.6 1603.0,825.7 1600.5,824.5 1600.5,819.2 1604.1,814.9 1612.9,815.9 1615.7,817.4" fill="url(#gDeb)" stroke="#1a1a1a" stroke-width="1.5" stroke-linejoin="round"/>
<polygon points="1586.6,814.1 1581.3,799.6 1584.2,785.7 1597.4,789.1 1602.1,796.8 1593.1,814.5" fill="url(#gDeb)" stroke="#1a1a1a" stroke-width="1.5" stroke-linejoin="round"/>
<polygon points="1571.6,803.2 1575.0,791.1 1589.6,791.5 1594.0,796.0 1591.6,804.7 1577.5,808.8" fill="url(#gDeb)" stroke="#1a1a1a" stroke-width="1.5" stroke-linejoin="round"/>
<ellipse cx="1675.0" cy="813.0" rx="20.0" ry="7.7" fill="#2a2a2a" opacity="0.45"/>
<polygon points="1695.6,812.2 1688.6,819.0 1683.9,816.8 1678.3,810.1 1683.0,807.1 1689.6,803.8 1693.0,807.2" fill="url(#gDeb)" stroke="#1a1a1a" stroke-width="1.5" stroke-linejoin="round"/>
<polygon points="1666.7,818.1 1666.9,813.3 1673.8,808.9 1680.5,807.5 1680.5,817.7 1672.6,821.4" fill="url(#gDeb)" stroke="#1a1a1a" stroke-width="1.5" stroke-linejoin="round"/>
<polygon points="1686.6,821.0 1681.8,817.6 1681.6,810.2 1685.6,808.0 1691.0,807.3 1692.3,815.4 1690.6,821.5" fill="url(#gDeb)" stroke="#1a1a1a" stroke-width="1.5" stroke-linejoin="round"/>
<polygon points="1666.0,818.4 1660.4,820.2 1654.0,809.9 1659.0,804.5 1668.3,804.7 1669.7,810.5" fill="url(#gDeb)" stroke="#1a1a1a" stroke-width="1.5" stroke-linejoin="round"/>
<polygon points="1689.7,818.4 1679.5,823.1 1674.7,816.7 1674.8,811.6 1683.4,807.3 1690.4,814.0" fill="url(#gDeb)" stroke="#1a1a1a" stroke-width="1.5" stroke-linejoin="round"/>
<ellipse cx="923.0" cy="562.0" rx="20.0" ry="28.0" fill="#2a2a2a" opacity="0.45"/>
<polygon points="905.9,576.7 903.8,573.5 905.7,563.9 910.9,564.2 914.6,569.7 911.3,577.5" fill="url(#gDeb)" stroke="#1a1a1a" stroke-width="1.5" stroke-linejoin="round"/>
<polygon points="905.9,566.3 900.7,564.1 900.5,558.3 900.9,555.0 904.0,553.1 907.6,554.8 911.4,563.9 908.9,565.4" fill="url(#gDeb)" stroke="#1a1a1a" stroke-width="1.5" stroke-linejoin="round"/>
<polygon points="911.9,557.5 903.3,561.0 898.6,556.4 901.1,549.0 906.2,549.7 912.2,553.8" fill="url(#gDeb)" stroke="#1a1a1a" stroke-width="1.5" stroke-linejoin="round"/>
<polygon points="929.6,599.0 923.2,595.6 923.8,590.8 929.2,587.1 933.1,589.3 933.5,594.4" fill="url(#gDeb)" stroke="#1a1a1a" stroke-width="1.5" stroke-linejoin="round"/>
<polygon points="915.3,591.2 908.5,592.8 899.3,588.7 898.1,582.9 899.7,580.2 903.0,575.7 912.4,579.8 917.6,583.3" fill="url(#gDeb)" stroke="#1a1a1a" stroke-width="1.5" stroke-linejoin="round"/>
<polygon points="914.0,588.6 910.7,584.7 912.2,577.8 916.3,576.2 918.0,579.9 918.9,585.8 916.8,587.5" fill="url(#gDeb)" stroke="#1a1a1a" stroke-width="1.5" stroke-linejoin="round"/>
<polygon points="925.9,568.6 920.4,570.3 914.2,568.5 909.6,564.7 907.9,561.4 917.1,558.0 920.6,556.7 926.4,559.9" fill="url(#gDeb)" stroke="#1a1a1a" stroke-width="1.5" stroke-linejoin="round"/>
<polygon points="926.9,561.5 925.0,555.1 928.3,549.0 934.4,549.7 935.4,554.9 932.6,558.9" fill="url(#gDeb)" stroke="#1a1a1a" stroke-width="1.5" stroke-linejoin="round"/>
<polygon points="917.7,589.2 910.3,586.2 906.7,583.0 913.0,574.1 917.6,573.5 922.0,582.8" fill="url(#gDeb)" stroke="#1a1a1a" stroke-width="1.5" stroke-linejoin="round"/>
<polygon points="925.9,592.8 923.1,593.3 918.3,589.6 916.1,583.9 919.9,580.2 927.2,580.2 933.1,583.6 930.0,589.2" fill="url(#gDeb)" stroke="#1a1a1a" stroke-width="1.5" stroke-linejoin="round"/>
<polygon points="915.3,561.8 909.7,563.4 903.0,561.3 898.2,551.5 907.5,544.3 912.3,544.1 916.6,552.6" fill="url(#gDeb)" stroke="#1a1a1a" stroke-width="1.5" stroke-linejoin="round"/>
<polygon points="901.0,579.8 897.7,575.1 895.4,569.2 902.2,565.3 906.6,563.9 911.7,569.1 909.5,576.4 907.8,577.8" fill="url(#gDeb)" stroke="#1a1a1a" stroke-width="1.5" stroke-linejoin="round"/>
<polygon points="911.3,581.8 908.3,574.4 909.8,567.1 918.4,564.0 925.1,567.5 924.9,573.7 917.6,582.5" fill="url(#gDeb)" stroke="#1a1a1a" stroke-width="1.5" stroke-linejoin="round"/>
<polygon points="931.7,597.0 929.3,590.9 931.8,586.4 941.5,584.1 943.2,586.4 942.2,593.8 936.8,600.6" fill="url(#gDeb)" stroke="#1a1a1a" stroke-width="1.5" stroke-linejoin="round"/>
<ellipse cx="918.5" cy="662.0" rx="10.8" ry="8.4" fill="#2a2a2a" opacity="0.45"/>
<polygon points="925.2,666.1 920.8,669.4 917.5,666.4 916.8,661.6 922.2,658.4 926.9,658.3 927.1,664.1" fill="url(#gDeb)" stroke="#1a1a1a" stroke-width="1.5" stroke-linejoin="round"/>
<polygon points="915.1,658.0 912.6,660.8 907.8,658.7 905.1,653.5 910.2,649.7 912.7,650.5 916.5,653.7" fill="url(#gDeb)" stroke="#1a1a1a" stroke-width="1.5" stroke-linejoin="round"/>
<polygon points="907.9,659.7 907.3,653.3 911.8,650.7 916.9,650.8 917.5,657.3 916.0,661.6 911.1,661.6" fill="url(#gDeb)" stroke="#1a1a1a" stroke-width="1.5" stroke-linejoin="round"/>
<polygon points="903.2,658.7 904.1,653.9 908.1,650.4 913.8,653.4 913.3,657.2 909.8,662.2 906.7,660.8" fill="url(#gDeb)" stroke="#1a1a1a" stroke-width="1.5" stroke-linejoin="round"/>
<ellipse cx="846.0" cy="418.0" rx="20.8" ry="12.6" fill="#2a2a2a" opacity="0.45"/>
<polygon points="871.9,408.6 868.0,412.0 861.2,409.9 859.7,406.6 862.8,401.5 863.4,399.3 869.1,400.1 871.8,403.2" fill="url(#gDeb)" stroke="#1a1a1a" stroke-width="1.5" stroke-linejoin="round"/>
<polygon points="868.2,412.8 863.0,408.8 864.0,404.2 869.8,401.4 875.1,405.8 874.0,410.5" fill="url(#gDeb)" stroke="#1a1a1a" stroke-width="1.5" stroke-linejoin="round"/>
<polygon points="852.0,409.7 845.9,416.5 839.2,413.0 838.0,409.9 840.8,402.6 842.1,399.8 851.8,401.8 854.5,407.5" fill="url(#gDeb)" stroke="#1a1a1a" stroke-width="1.5" stroke-linejoin="round"/>
<polygon points="818.9,411.4 819.8,405.5 826.3,404.3 831.4,408.4 828.3,414.8 822.5,414.2" fill="url(#gDeb)" stroke="#1a1a1a" stroke-width="1.5" stroke-linejoin="round"/>
<polygon points="833.9,412.5 830.8,414.7 824.8,416.9 821.4,410.7 827.7,403.6 830.4,403.4 836.7,405.7" fill="url(#gDeb)" stroke="#1a1a1a" stroke-width="1.5" stroke-linejoin="round"/>
<polygon points="835.6,427.9 835.8,419.4 837.3,413.7 843.8,413.8 847.7,418.4 846.3,425.5 841.0,428.5" fill="url(#gDeb)" stroke="#1a1a1a" stroke-width="1.5" stroke-linejoin="round"/>
<polygon points="858.4,430.0 853.1,435.6 845.9,430.0 843.8,426.8 849.4,421.1 854.7,420.7 858.2,425.5" fill="url(#gDeb)" stroke="#1a1a1a" stroke-width="1.5" stroke-linejoin="round"/>
<polygon points="859.6,415.4 862.3,413.1 867.8,410.7 871.3,411.6 872.3,416.3 867.1,420.7 862.9,419.2" fill="url(#gDeb)" stroke="#1a1a1a" stroke-width="1.5" stroke-linejoin="round"/>
<polygon points="857.5,433.1 852.8,433.6 847.8,424.3 850.2,419.8 858.0,419.8 860.1,423.2 861.0,430.8" fill="url(#gDeb)" stroke="#1a1a1a" stroke-width="1.5" stroke-linejoin="round"/>
<polygon points="1543.6,415.9 1540.0,420.3 1536.3,418.7 1533.5,417.6 1532.4,412.9 1536.3,409.9 1539.3,410.4 1542.3,412.2" fill="url(#gDeb)" stroke="#1a1a1a" stroke-width="1.5" stroke-linejoin="round"/>
<polygon points="1547.8,417.4 1544.8,416.0 1546.3,409.7 1551.7,408.4 1554.7,412.1 1554.4,416.2 1551.6,419.8" fill="url(#gDeb)" stroke="#1a1a1a" stroke-width="1.5" stroke-linejoin="round"/>
<polygon points="1535.1,426.7 1533.7,425.0 1537.0,421.2 1539.1,421.0 1541.9,423.5 1540.6,427.2 1537.8,428.8" fill="url(#gDeb)" stroke="#1a1a1a" stroke-width="1.5" stroke-linejoin="round"/>
<polygon points="1531.3,414.2 1532.2,411.1 1535.7,410.7 1539.5,413.9 1536.9,417.4 1533.6,417.7" fill="url(#gDeb)" stroke="#1a1a1a" stroke-width="1.5" stroke-linejoin="round"/>
<ellipse cx="1062.5" cy="882.0" rx="30.0" ry="15.4" fill="#2a2a2a" opacity="0.45"/>
<polygon points="1051.4,885.3 1050.9,880.4 1057.6,873.2 1063.2,874.6 1066.3,881.4 1063.7,887.9 1056.2,890.5" fill="url(#gDeb)" stroke="#1a1a1a" stroke-width="1.5" stroke-linejoin="round"/>
<polygon points="1073.4,877.3 1063.7,873.8 1064.0,867.1 1070.0,858.6 1080.4,862.4 1083.4,870.0" fill="url(#gDeb)" stroke="#1a1a1a" stroke-width="1.5" stroke-linejoin="round"/>
<polygon points="1083.5,900.4 1086.3,896.9 1089.5,892.6 1095.5,890.2 1098.1,895.6 1095.1,900.7 1094.9,902.6 1088.8,904.1" fill="url(#gDeb)" stroke="#1a1a1a" stroke-width="1.5" stroke-linejoin="round"/>
<polygon points="1054.0,880.6 1047.5,877.9 1045.5,869.9 1049.8,865.0 1060.6,863.3 1064.4,873.7 1062.0,879.7" fill="url(#gDeb)" stroke="#1a1a1a" stroke-width="1.5" stroke-linejoin="round"/>
<polygon points="1062.0,869.1 1067.2,858.7 1077.0,857.6 1083.5,866.6 1079.4,871.1 1072.1,879.0 1067.1,876.3" fill="url(#gDeb)" stroke="#1a1a1a" stroke-width="1.5" stroke-linejoin="round"/>
<polygon points="1076.6,872.0 1071.1,875.3 1062.0,868.4 1060.6,862.5 1060.8,856.7 1071.9,859.3 1078.9,862.4" fill="url(#gDeb)" stroke="#1a1a1a" stroke-width="1.5" stroke-linejoin="round"/>
<polygon points="1056.4,884.4 1045.7,886.4 1037.8,876.1 1043.9,864.6 1055.5,864.7 1060.0,870.4 1059.0,876.0" fill="url(#gDeb)" stroke="#1a1a1a" stroke-width="1.5" stroke-linejoin="round"/>
<polygon points="1049.3,866.5 1053.1,857.3 1061.6,858.1 1067.8,864.6 1064.4,870.8 1057.2,875.4" fill="url(#gDeb)" stroke="#1a1a1a" stroke-width="1.5" stroke-linejoin="round"/>
<polygon points="1042.1,882.9 1040.5,882.6 1038.1,876.8 1042.5,871.4 1046.2,868.5 1049.2,873.2 1050.3,879.1 1047.9,882.4" fill="url(#gDeb)" stroke="#1a1a1a" stroke-width="1.5" stroke-linejoin="round"/>
<polygon points="1083.7,886.7 1068.4,891.0 1063.6,882.0 1065.2,871.8 1073.0,871.7 1079.7,876.0" fill="url(#gDeb)" stroke="#1a1a1a" stroke-width="1.5" stroke-linejoin="round"/>
<polygon points="1045.8,888.7 1047.7,882.3 1051.9,878.4 1060.2,874.5 1061.8,876.4 1061.0,885.1 1058.8,889.6 1051.7,891.9" fill="url(#gDeb)" stroke="#1a1a1a" stroke-width="1.5" stroke-linejoin="round"/>
<polygon points="1041.2,897.8 1034.4,894.8 1032.1,888.4 1037.3,886.5 1045.3,884.4 1049.4,890.6 1044.1,896.6" fill="url(#gDeb)" stroke="#1a1a1a" stroke-width="1.5" stroke-linejoin="round"/>
<polygon points="1705.3,832.3 1701.8,829.8 1702.1,825.2 1706.7,824.2 1711.1,827.4 1709.5,832.8" fill="url(#gDeb)" stroke="#1a1a1a" stroke-width="1.5" stroke-linejoin="round"/>
<polygon points="1691.6,824.6 1692.3,822.1 1694.2,818.4 1700.5,819.3 1700.8,822.7 1699.9,826.5 1694.9,829.5" fill="url(#gDeb)" stroke="#1a1a1a" stroke-width="1.5" stroke-linejoin="round"/>
<polygon points="1696.5,820.5 1694.3,816.9 1696.7,814.6 1698.5,812.7 1702.1,815.5 1703.4,817.9 1702.1,821.2 1700.4,821.7" fill="url(#gDeb)" stroke="#1a1a1a" stroke-width="1.5" stroke-linejoin="round"/>
<polygon points="1716.5,832.7 1716.0,829.1 1717.2,827.1 1718.7,824.8 1722.6,828.3 1723.1,831.3 1720.3,832.2" fill="url(#gDeb)" stroke="#1a1a1a" stroke-width="1.5" stroke-linejoin="round"/>
</g>
<path d="M1035,903 Q1060,890 1072,872 Q1085,888 1115,903 Z" fill="#151515"/>
<path d="M1763,848 L1782,852 L1765,856 Z" fill="#bcbcbc" stroke="#333" stroke-width="0.8"/>
<ellipse cx="1771" cy="880" rx="7" ry="6" fill="url(#gDeb)"/>
<path d="M668,888 L680,880 L684,898 L670,900 Z" fill="#b0b0b0" stroke="#444" stroke-width="0.8"/>
<path d="M820,425 Q832,410 850,405 L848,418 Q835,420 822,430 Z" fill="#c8c8c8" stroke="#333" stroke-width="0.8"/>
<line x1="848" y1="366" x2="1599" y2="357.5" stroke="#e0201e" stroke-width="3"/>
<path d="M1194,777.5 H1207 M1200.5,771 V784" stroke="#d8d8d8" stroke-width="1"/>
</svg>
<svg class="a" style="left:0;top:0" width="1999" height="1513" viewBox="0 0 1999 1513" font-family="Liberation Sans, sans-serif">
<defs>
<linearGradient id="iFold" x1="0" y1="0" x2="1" y2="1"><stop offset="0" stop-color="#e8eef2"/><stop offset="1" stop-color="#b8ccd8"/></linearGradient>
<linearGradient id="iRain" x1="0" y1="0" x2="0" y2="1"><stop offset="0" stop-color="#f07070"/><stop offset="0.25" stop-color="#f0b060"/><stop offset="0.45" stop-color="#e0e060"/><stop offset="0.65" stop-color="#70d070"/><stop offset="0.85" stop-color="#70a0f0"/><stop offset="1" stop-color="#a070e0"/></linearGradient>
<linearGradient id="iHist" x1="0" y1="0" x2="1" y2="0"><stop offset="0" stop-color="#5090d0"/><stop offset="0.3" stop-color="#50c060"/><stop offset="0.6" stop-color="#e0e050"/><stop offset="1" stop-color="#e05050"/></linearGradient>
<linearGradient id="iClap" x1="0" y1="0" x2="0.4" y2="1"><stop offset="0" stop-color="#3a70c0"/><stop offset="0.6" stop-color="#a8d0f0"/><stop offset="1" stop-color="#4a80c8"/></linearGradient>
</defs>
<!-- ========== TOP TOOLBAR ========== -->
<g fill="#8a8a8a">
<circle cx="76" cy="89" r="1.1"/><circle cx="76" cy="96" r="1.1"/><circle cx="76" cy="103" r="1.1"/><circle cx="76" cy="110" r="1.1"/><circle cx="76" cy="117" r="1.1"/>
</g>
<!-- folder -->
<path d="M88,106 L88,120 Q89,123 93,121 L120,104 Q124,100 122,97 L118,95 L116,88 Q114,85 110,87 L98,93 L94,91 Q90,92 89,96 Z" fill="url(#iFold)" stroke="#8c959c" stroke-width="1.3"/>
<path d="M92,118 L94,101 L117,89 L118,96" fill="#f4f6f8" stroke="#9aa4aa" stroke-width="1"/>
<path d="M90,121 L98,104 L123,96 L114,110 Z" fill="#c4d6e2" stroke="#8c959c" stroke-width="1"/>
<!-- floppy -->
<rect x="143.5" y="88" width="32" height="32" rx="2" fill="#9fb2d4" stroke="#7e8a9e" stroke-width="1.2"/>
<rect x="148" y="89" width="23" height="17" fill="#eef0f4"/>
<line x1="148" y1="93" x2="171" y2="93" stroke="#b8c4d8" stroke-width="1.5"/><line x1="148" y1="98" x2="171" y2="98" stroke="#b8c4d8" stroke-width="1.5"/><line x1="148" y1="103" x2="171" y2="103" stroke="#b8c4d8" stroke-width="1.5"/>
<rect x="150" y="109" width="19" height="11" fill="#dde2ea"/>
<rect x="151.5" y="110" width="5" height="9" fill="#8c8c8c"/>
<!-- separator -->
<line x1="192" y1="80" x2="192" y2="127" stroke="#777" stroke-width="1" stroke-dasharray="1.2,2.6"/>
<!-- point picking -->
<g stroke="#fff" stroke-width="4.5" fill="none"><circle cx="225" cy="102" r="7"/><path d="M225,86 V95 M225,109 V120 M209,102 H218 M232,102 H243"/></g>
<g stroke="#8a8a8a" stroke-width="2" fill="none"><circle cx="225" cy="102" r="7"/><path d="M225,86 V95 M225,109 V120 M209,102 H218 M232,102 H243"/></g>
<path d="M229,97 L229,118 L233,113 L237,121 L240,119 L236,112 L242,111 Z" fill="#f4f4f4" stroke="#8a8a8a" stroke-width="1.1"/>
<!-- list -->
<rect x="266" y="86.5" width="28" height="35" fill="#e8f0fa" stroke="#8e9aa8" stroke-width="1.2"/>
<g fill="#e07070"><circle cx="272" cy="93.5" r="1.8"/><circle cx="272" cy="100.5" r="1.8"/><circle cx="272" cy="107.5" r="1.8"/><circle cx="272" cy="114.5" r="1.8"/></g>
<g stroke="#4a78b8" stroke-width="1.8"><path d="M277,93.5 H289 M277,100.5 H289 M277,107.5 H289 M277,114.5 H289"/></g>
<!-- red cross translate -->
<path d="M326,85 H333 V96 H343 V102 H333 V112 H326 V102 H316 V96 H326 Z" fill="#ea7a7a"/>
<path d="M334,92 L352,87 M336,94 L338,119 L318,122" stroke="#6a6a6a" stroke-width="1.2" stroke-dasharray="3,2" fill="none"/>
<!-- rainbow -->
<path d="M370,92 L380,92 L385,97 L394,92 L408,92 L408,118 L370,118 Z" fill="url(#iRain)"/>
<path d="M378,99 L384,94 L398,94 L402,104 L402,115 L380,115 L375,104 Z" fill="#f2f2f0"/>
<path d="M380,92 L386,106 M395,96 L402,112" stroke="#777" stroke-width="1"/>
<!-- merge -->
<path d="M443,95 H433 V115 H443" stroke="#4a8ae0" stroke-width="4" fill="none"/>
<rect x="450" y="96" width="6" height="17" fill="#9a70e8"/>
<path d="M449,104.5 H442 M445,101 L440,104.5 L445,108" stroke="#e03030" stroke-width="2" fill="none"/>
<!-- delete X -->
<path d="M485,91 L508,116 M508,91 L485,116" stroke="#c87a7a" stroke-width="4.5" stroke-linecap="round"/>
<path d="M485,91 L508,116 M508,91 L485,116" stroke="#e8a0a0" stroke-width="2" stroke-linecap="round"/>
<line x1="531" y1="80" x2="531" y2="127" stroke="#777" stroke-width="1" stroke-dasharray="1.2,2.6"/>
<!-- register -->
<path d="M565,92 L572,91 L576,95 L575,101 L568,102 L565,99 Z" fill="#e05050"/>
<path d="M553,105 L560,103 L564,107 L563,114 L556,116 L552,111 Z" fill="#3a9a50"/>
<path d="M572,101 Q580,108 572,113 L565,114" stroke="#4a5ad8" stroke-width="1.8" fill="none"/>
<path d="M567,111 L563,114.5 L568,117" stroke="#4a5ad8" stroke-width="1.6" fill="none"/>
<!-- normals -->
<path d="M609.5,117 V96 M606.5,100 L609.5,93 L612.5,100" stroke="#e05050" stroke-width="1.4" fill="#e05050"/>
<path d="M615,98 L620,94 L628,94 L632,98 L631,110 L626,116 L619,116 L615,108 Z" fill="#70d090"/>
<path d="M615,98 L620,94 L628,94 L632,98 L631,101 L615,102 Z" fill="#e07080"/>
<!-- subsample dots -->
<g fill="#e06060"><circle cx="666" cy="97" r="1.3"/><circle cx="674" cy="95" r="1.3"/><circle cx="679" cy="97" r="1.3"/><circle cx="664" cy="103" r="1.3"/><circle cx="673" cy="101" r="1.3"/><circle cx="681" cy="106" r="1.3"/><circle cx="667" cy="108" r="1.3"/><circle cx="676" cy="111" r="1.3"/><circle cx="671" cy="113" r="1.3"/></g>
<g fill="#4a5ab8"><circle cx="670" cy="94" r="1.3"/><circle cx="680" cy="101" r="1.3"/><circle cx="668" cy="104" r="1.3"/><circle cx="677" cy="104" r="1.3"/><circle cx="672" cy="108" r="1.3"/><circle cx="678" cy="112" r="1.3"/></g>
<!-- mesh triangle -->
<path d="M716,94 L737,93 L740,100 L739,112 L735,116 L718,115 L716,108 Z" fill="#a8d4e4" stroke="#88b8cc" stroke-width="1"/>
<g fill="#4a6a80"><circle cx="722" cy="97" r="0.9"/><circle cx="728" cy="98" r="0.9"/><circle cx="733" cy="99" r="0.9"/><circle cx="725" cy="103" r="0.9"/><circle cx="731" cy="104" r="0.9"/><circle cx="728" cy="109" r="0.9"/></g>
<!-- c2c -->
<rect x="770" y="91" width="26" height="26" fill="#f4f4f4"/>
<g fill="#6a6a6a"><circle cx="778" cy="94" r="1.3"/><circle cx="785" cy="94" r="1.3"/><circle cx="792" cy="93" r="1.3"/><circle cx="783" cy="98" r="1.3"/><circle cx="790" cy="101" r="1.3"/><circle cx="793" cy="105" r="1.3"/><circle cx="772" cy="106" r="1.3"/><circle cx="774" cy="111" r="1.3"/><circle cx="772" cy="115" r="1.3"/><circle cx="777" cy="114" r="1.3"/><circle cx="781" cy="115" r="1.3"/></g>
<g fill="#5a9ae0"><circle cx="789" cy="97" r="1.2"/><circle cx="794" cy="100" r="1.2"/></g>
<path d="M778,109 L783,103" stroke="#f07070" stroke-width="2"/>
<!-- c2m -->
<rect x="825" y="91" width="24" height="26" fill="#f4f4f4"/>
<path d="M828,93 L848,93 L848,110 Z" fill="#e0c060"/>
<g fill="#5a5a5a"><circle cx="827" cy="106" r="1.3"/><circle cx="829" cy="110" r="1.3"/><circle cx="827" cy="114" r="1.3"/><circle cx="831" cy="113" r="1.3"/><circle cx="835" cy="114" r="1.3"/></g>
<path d="M832,108 L838,102" stroke="#5a9ae0" stroke-width="2"/>
<!-- closest point -->
<rect x="873" y="86" width="36" height="36" fill="#eeeeee"/>
<g fill="#4a4a4a"><circle cx="877" cy="104" r="1.7"/><circle cx="881" cy="110" r="1.7"/><circle cx="879" cy="117" r="1.7"/><circle cx="887" cy="115" r="1.7"/><circle cx="894" cy="118" r="1.7"/></g>
<path d="M890,108 L897,100" stroke="#5ab0a0" stroke-width="1.2"/><circle cx="898" cy="99" r="1.8" fill="none" stroke="#5ab0a0" stroke-width="1"/>
<rect x="897" y="88" width="10" height="10" fill="#f8f8f8" stroke="#6a6a6a" stroke-width="1.2"/><rect x="900" y="91" width="5" height="5" fill="none" stroke="#8a8a8a" stroke-width="0.8"/>
<!-- CC CC -->
<g font-weight="bold" font-size="14.5" stroke-width="0.3">
<text x="934" y="104.5" fill="#e0608c" stroke="#e0608c">C</text><text x="945.5" y="104.5" fill="#f0cca8" stroke="#f0cca8">C</text>
<text x="934" y="116.5" fill="#50a47e" stroke="#50a47e">C</text><text x="945.5" y="116.5" fill="#7a84d4" stroke="#7a84d4">C</text>
</g>
<!-- potatoes -->
<path d="M991,110 Q989,102 995,98 Q1000,96 1001,100 Q1006,100 1007,106 Q1008,111 1002,112 Q995,114 991,110 Z" fill="#d8a878"/>
<circle cx="995" cy="105" r="4" fill="#e8b888"/>
<!-- checkerboard -->
<rect x="1035" y="85.5" width="37.5" height="37" fill="#a6bcd8"/>
<g fill="#6e7f98"><rect x="1035" y="85.5" width="12.5" height="12.3"/><rect x="1060" y="85.5" width="12.5" height="12.3"/><rect x="1047.5" y="97.8" width="12.5" height="12.4"/><rect x="1035" y="110.2" width="12.5" height="12.3"/><rect x="1060" y="110.2" width="12.5" height="12.3"/></g>
<!-- SOR -->
<text x="0" y="0" font-size="18" font-weight="bold" fill="#8e8e8e" transform="translate(1093.5 117.5) scale(0.78 0.88)">SOR</text>
<g fill="#d88888"><circle cx="1104" cy="94" r="1.1"/><circle cx="1116" cy="96" r="1.1"/><circle cx="1120" cy="90" r="1.1"/></g>
<g fill="#aaa"><circle cx="1097" cy="95" r="1"/><circle cx="1109" cy="90" r="1"/><circle cx="1112" cy="97" r="1"/></g>
<line x1="1141" y1="80" x2="1141" y2="127" stroke="#777" stroke-width="1" stroke-dasharray="1.2,2.6"/>
<!-- scissors -->
<g stroke="#777" stroke-width="1.2" fill="none"><circle cx="1169" cy="104" r="2.3"/><circle cx="1171" cy="110" r="2.3"/><path d="M1171,104 L1184,98 M1173,108 L1182,101"/></g>
<!-- red rotate -->
<g stroke="#d86060" stroke-width="2" fill="none"><path d="M1229,93 V116"/><ellipse cx="1229" cy="104" rx="10" ry="4"/></g>
<path d="M1225,97 L1229,91 L1233,97 Z M1225,111 L1229,117 L1233,111 Z M1236,100 L1241,104 L1236,108 Z" fill="#d86060"/>
<!-- box section -->
<g stroke="#9a9a9a" stroke-width="1.2" fill="none"><path d="M1266,96 L1275,86 L1301,86 L1301,112 L1292,122 L1266,122 Z M1266,96 L1292,96 L1301,86 M1292,96 V122"/></g>
<path d="M1266,103 L1292,101 L1292,111 L1266,112 Z" fill="#e86060"/>
<path d="M1292,101 L1300,96 L1300,106 L1292,111 Z" fill="#f0a0a0"/>
<!-- mirror star -->
<g stroke="#8a8ab0" stroke-width="1.8" fill="none"><path d="M1336,96 L1333,108 L1346,104 M1338,100 L1345,112 M1331,104 L1347,106"/></g>
<line x1="1373" y1="88" x2="1373" y2="118" stroke="#8a8a8a" stroke-width="1.2" stroke-dasharray="1.3,5.8"/>
<!-- histogram -->
<path d="M1392,94 V115.5 H1415" stroke="#4a6a9a" stroke-width="1.3" fill="none"/>
<rect x="1393" y="105" width="3" height="10" fill="#4a90d0"/><rect x="1396" y="100" width="4" height="15" fill="#50c060"/><rect x="1400" y="100" width="3" height="15" fill="#90d050"/><rect x="1403" y="102" width="3" height="13" fill="#e0e050"/><rect x="1406" y="108" width="4" height="7" fill="#e05050"/>
<!-- curve -->
<path d="M1448,96 V115 H1468" stroke="#8a8a8a" stroke-width="1.2" fill="none"/>
<path d="M1449,99 Q1455,100 1458,108 Q1461,114 1466,114" stroke="#a0b8d8" stroke-width="1.5" fill="none"/>
<text x="1452" y="100" font-size="8" fill="#e07070" font-style="italic">μ,σ</text>
<!-- min max -->
<text x="1500" y="99.5" font-size="8" fill="#e07070">min</text>
<text x="1507" y="115.5" font-size="8" fill="#e07070">max</text>
<rect x="1502" y="103.5" width="20" height="3" fill="url(#iHist)"/>
<path d="M1505,101.5 L1501.5,105 L1505,108.5 M1519,101.5 L1522.5,105 L1519,108.5" stroke="#4a60c0" stroke-width="1.2" fill="none"/>
<path d="M1512,99 V111" stroke="#e8e060" stroke-width="1"/>
<!-- trash -->
<rect x="1557" y="95" width="4.5" height="20" fill="url(#iRain)"/>
<path d="M1564,97 H1578 M1565,99 H1577 L1576,115 H1566 Z" fill="#a8a8a8" stroke="#999" stroke-width="1"/>
<path d="M1568,102 V112 M1571,102 V112 M1574,102 V112" stroke="#d8d8d8" stroke-width="1"/>
<!-- chevrons -->
<g stroke="#8a8a8a" stroke-width="2.4" fill="none">
<path d="M1628,98.5 L1634,103.5 L1628,108.5 M1635,98.5 L1641,103.5 L1635,108.5"/>
<path d="M1721,98.5 L1727,103.5 L1721,108.5 M1728,98.5 L1734,103.5 L1728,108.5"/>
<path d="M1817,98.5 L1823,103.5 L1817,108.5 M1824,98.5 L1830,103.5 L1824,108.5"/>
<path d="M1913,98.5 L1919,103.5 L1913,108.5 M1920,98.5 L1926,103.5 L1920,108.5"/>
</g>
<g stroke="#8a8a8a" stroke-width="1.2" stroke-dasharray="1.3,5.8">
<line x1="1658" y1="88" x2="1658" y2="119"/><line x1="1753" y1="88" x2="1753" y2="119"/><line x1="1847.5" y1="88" x2="1847.5" y2="119"/>
</g>
<!-- CANUPO -->
<text x="0" y="0" font-size="8" font-weight="bold" fill="#7a98c8" transform="translate(1670 93.5) scale(0.92 1)">CANUPO</text>
<g fill="#6a6a6a"><circle cx="1679" cy="100" r="1"/><circle cx="1682" cy="103" r="1"/><circle cx="1677" cy="105" r="1"/><circle cx="1681" cy="107" r="1"/><circle cx="1684" cy="99" r="1"/></g>
<path d="M1686,104 H1693" stroke="#555" stroke-width="0.8"/>
<circle cx="1697" cy="102" r="2" fill="#a0d8e8"/><circle cx="1701" cy="105" r="2" fill="#f07070"/>
<rect x="1673" y="108" width="10" height="2" fill="#d05050"/>
<text x="0" y="0" font-size="10.5" font-weight="bold" fill="#555" transform="translate(1675 120) scale(0.8 1)">Create</text>
<!-- Kd -->
<path d="M1770,112 Q1764,100 1772,92 Q1780,86 1790,89 Q1799,94 1799,106 Q1798,118 1790,121 L1775,121 Z" fill="#e4e8ec" stroke="#c8d0d8" stroke-width="0.8"/>
<text x="1766" y="121" font-size="15.5" font-weight="bold" fill="#5a5a5a">Kd</text>
<!-- S curve -->
<line x1="1862" y1="88" x2="1862" y2="122" stroke="#555" stroke-width="1.2" stroke-dasharray="6,1.5"/>
<path d="M1875,88 Q1864,94 1869,101 Q1880,110 1873,114 Q1868,116 1862,116" stroke="#e07080" stroke-width="1.6" fill="none"/>

<!-- ========== LEFT TOOLBAR ========== -->
<g fill="#8a8a8a"><circle cx="76" cy="140.5" r="1.1"/><circle cx="83" cy="140.5" r="1.1"/><circle cx="90" cy="140.5" r="1.1"/><circle cx="97" cy="140.5" r="1.1"/><circle cx="104" cy="140.5" r="1.1"/></g>
<!-- monitor -->
<rect x="77" y="153.5" width="30.5" height="20" rx="1" fill="#f8fbff" stroke="#4e5566" stroke-width="2"/>
<path d="M84,172.5 A8.5,8.5 0 0 1 101,172.5 L97,172.5 A4.5,4.5 0 0 0 88,172.5 Z" fill="#48b0f0"/>
<g fill="#48b0f0"><circle cx="86" cy="166" r="1.6"/><circle cx="92.5" cy="163" r="1.6"/><circle cx="99" cy="166" r="1.6"/></g>
<rect x="78" y="175" width="28" height="2" fill="#d8d8d8"/>
<rect x="85" y="180" width="15" height="3" fill="#c8c8c8"/>
<!-- camera -->
<path d="M76.5,216 Q76.5,213 79.5,213 L86,213 L89,210 L101,210 L104,213 L106,213 Q108.5,213 108.5,216 L108.5,233 Q108.5,236 105.5,236 L79.5,236 Q76.5,236 76.5,233 Z" fill="#6a7294"/>
<rect x="79" y="211" width="3" height="3" fill="#3a3f55"/>
<circle cx="92" cy="223.5" r="9" fill="#2e3a6a"/><circle cx="92" cy="223.5" r="6" fill="#5a68c8"/><circle cx="90" cy="222" r="2" fill="#a8b0f0"/>
<circle cx="104" cy="215.5" r="1.3" fill="#f0f0f0"/>
<!-- 1:1 -->
<text x="84" y="282.5" font-family="Liberation Serif, serif" font-weight="bold" font-size="15" fill="#111">1:1</text>
<!-- + -->
<path d="M93,322.5 V342.5 M83,332.5 H103" stroke="#555" stroke-width="1.3"/>
<!-- pressed auto -->
<rect x="67.5" y="362.5" width="49" height="49" rx="2" fill="#c3c3c3"/>
<path d="M93,377 V391 M83,387 H103" stroke="#222" stroke-width="1.3"/>
<text x="80" y="399.5" font-size="10.5" font-weight="bold" fill="#e02030" letter-spacing="-0.3">auto</text>
<!-- triangle rotate -->
<path d="M89.5,426 L74,441 L89.5,456 Z" fill="#d4d4d4" stroke="#8a8a8a" stroke-width="2"/>
<path d="M93,445 Q101,446 108,439" stroke="#8a8a8a" stroke-width="1.6" fill="none"/>
<path d="M103,436.5 L111,436 L109,443 Z" fill="#8a8a8a"/>
<!-- purple cube -->
<path d="M75.5,488 L84,480 L108.5,480 L108.5,504 L100,512 L75.5,512 Z" fill="#7e7cc0"/>
<path d="M75.5,488 L84,480 L108.5,480 L100,488 Z" fill="#b8b6e8"/>
<path d="M100,488 L108.5,480 L108.5,504 L100,512 Z" fill="#d6d6f8"/>
<path d="M84,488 L100,488 L100,508 L84,508 Z" fill="#a0a0d8"/>
<path d="M105.5,512.5 L110,516.5 L114.5,512.5" stroke="#111" stroke-width="1.2" fill="none"/>
<!-- move arrows -->
<circle cx="92" cy="550" r="11.5" fill="#e8ece8" stroke="#c8dcd0" stroke-width="1.5"/>
<path d="M92,540 V560 M82,550 H102" stroke="#111" stroke-width="2.2"/>
<path d="M88.5,541.5 L92,537 L95.5,541.5 Z M88.5,558.5 L92,563 L95.5,558.5 Z M83.5,546.5 L79,550 L83.5,553.5 Z M100.5,546.5 L105,550 L100.5,553.5 Z" fill="#111"/>
<path d="M105.5,567 L110,571 L114.5,567" stroke="#111" stroke-width="1.2" fill="none"/>
<!-- magnifier -->
<circle cx="88" cy="600" r="10" fill="#d4ecf0" stroke="#9aa2a8" stroke-width="3"/>
<path d="M96,608 L107,618" stroke="#8e969c" stroke-width="5" stroke-linecap="round"/>

<!-- cube views -->
<polygon points="80.6,653.5 86.6,648.5 103.6,648.5 103.6,663.7 97.6,668.7 80.6,668.7" fill="#ffffff" stroke="none"/>
<polygon points="80.6,653.5 97.6,653.5 103.6,648.5 86.6,648.5" fill="#ef8a3e" stroke="none"/>
<path d="M80.6,653.5 L97.6,653.5 M97.6,653.5 L97.6,668.7 M97.6,668.7 L80.6,668.7 M80.6,668.7 L80.6,653.5 M86.6,648.5 L103.6,648.5 M103.6,648.5 L103.6,663.7 M103.6,663.7 L86.6,663.7 M86.6,663.7 L86.6,648.5 M80.6,653.5 L86.6,648.5 M97.6,653.5 L103.6,648.5 M97.6,668.7 L103.6,663.7 M80.6,668.7 L86.6,663.7" stroke="#3a3a3a" stroke-width="1.1" fill="none"/>
<polygon points="80.6,708.5 86.6,703.5 103.6,703.5 103.6,718.7 97.6,723.7 80.6,723.7" fill="#ffffff" stroke="none"/>
<polygon points="80.6,708.5 97.6,708.5 97.6,723.7 80.6,723.7" fill="#ef8a3e" stroke="none"/>
<path d="M80.6,708.5 L97.6,708.5 M97.6,708.5 L97.6,723.7 M97.6,723.7 L80.6,723.7 M80.6,723.7 L80.6,708.5 M86.6,703.5 L103.6,703.5 M103.6,703.5 L103.6,718.7 M103.6,718.7 L86.6,718.7 M86.6,718.7 L86.6,703.5 M80.6,708.5 L86.6,703.5 M97.6,708.5 L103.6,703.5 M97.6,723.7 L103.6,718.7 M80.6,723.7 L86.6,718.7" stroke="#3a3a3a" stroke-width="1.1" fill="none"/>
<polygon points="80.6,762.5 86.6,757.5 103.6,757.5 103.6,772.7 97.6,777.7 80.6,777.7" fill="#ffffff" stroke="none"/>
<polygon points="80.6,762.5 86.6,757.5 86.6,772.7 80.6,777.7" fill="#ef8a3e" stroke="none"/>
<path d="M80.6,762.5 L97.6,762.5 M97.6,762.5 L97.6,777.7 M97.6,777.7 L80.6,777.7 M80.6,777.7 L80.6,762.5 M86.6,757.5 L103.6,757.5 M103.6,757.5 L103.6,772.7 M103.6,772.7 L86.6,772.7 M86.6,772.7 L86.6,757.5 M80.6,762.5 L86.6,757.5 M97.6,762.5 L103.6,757.5 M97.6,777.7 L103.6,772.7 M80.6,777.7 L86.6,772.7" stroke="#3a3a3a" stroke-width="1.1" fill="none"/>
<polygon points="80.6,817.5 86.6,812.5 103.6,812.5 103.6,827.7 97.6,832.7 80.6,832.7" fill="#ffffff" stroke="none"/>
<polygon points="86.6,812.5 103.6,812.5 103.6,827.7 86.6,827.7" fill="#ef8a3e" stroke="none"/>
<path d="M80.6,817.5 L97.6,817.5 M97.6,817.5 L97.6,832.7 M97.6,832.7 L80.6,832.7 M80.6,832.7 L80.6,817.5 M86.6,812.5 L103.6,812.5 M103.6,812.5 L103.6,827.7 M103.6,827.7 L86.6,827.7 M86.6,827.7 L86.6,812.5 M80.6,817.5 L86.6,812.5 M97.6,817.5 L103.6,812.5 M97.6,832.7 L103.6,827.7 M80.6,832.7 L86.6,827.7" stroke="#3a3a3a" stroke-width="1.1" fill="none"/>
<polygon points="80.6,871.5 86.6,866.5 103.6,866.5 103.6,881.7 97.6,886.7 80.6,886.7" fill="#ffffff" stroke="none"/>
<polygon points="97.6,871.5 103.6,866.5 103.6,881.7 97.6,886.7" fill="#ef8a3e" stroke="none"/>
<path d="M80.6,871.5 L97.6,871.5 M97.6,871.5 L97.6,886.7 M97.6,886.7 L80.6,886.7 M80.6,886.7 L80.6,871.5 M86.6,866.5 L103.6,866.5 M103.6,866.5 L103.6,881.7 M103.6,881.7 L86.6,881.7 M86.6,881.7 L86.6,866.5 M80.6,871.5 L86.6,866.5 M97.6,871.5 L103.6,866.5 M97.6,886.7 L103.6,881.7 M80.6,886.7 L86.6,881.7" stroke="#3a3a3a" stroke-width="1.1" fill="none"/>
<polygon points="80.6,926.5 86.6,921.5 103.6,921.5 103.6,936.7 97.6,941.7 80.6,941.7" fill="#ffffff" stroke="none"/>
<polygon points="80.6,941.7 97.6,941.7 103.6,936.7 86.6,936.7" fill="#ef8a3e" stroke="none"/>
<path d="M80.6,926.5 L97.6,926.5 M97.6,926.5 L97.6,941.7 M97.6,941.7 L80.6,941.7 M80.6,941.7 L80.6,926.5 M86.6,921.5 L103.6,921.5 M103.6,921.5 L103.6,936.7 M103.6,936.7 L86.6,936.7 M86.6,936.7 L86.6,921.5 M80.6,926.5 L86.6,921.5 M97.6,926.5 L103.6,921.5 M97.6,941.7 L103.6,936.7 M80.6,941.7 L86.6,936.7" stroke="#3a3a3a" stroke-width="1.1" fill="none"/>
<!-- FRONT / BACK -->
<g>
<path d="M92.5,966 L109,975 L109,994 L92.5,1003 L76,994 L76,975 Z" fill="#ea8a3c"/>
<path d="M92.5,966 L109,975 L92.5,984 L76,975 Z" fill="#f4b07c"/>
<path d="M92.5,984 V1003" stroke="#c86a20" stroke-width="0.8"/>
<text x="92.5" y="979.5" text-anchor="middle" font-size="10" font-weight="bold" fill="#111" transform="translate(92.5 0) scale(0.92 1) translate(-92.5 0)">FRONT</text>
<path d="M92.5,1021 L109,1030 L109,1049 L92.5,1058 L76,1049 L76,1030 Z" fill="#ea8a3c"/>
<path d="M92.5,1021 L109,1030 L92.5,1039 L76,1030 Z" fill="#f4b07c"/>
<path d="M92.5,1039 V1058" stroke="#c86a20" stroke-width="0.8"/>
<text x="92" y="1034" text-anchor="middle" font-size="10" font-weight="bold" fill="#111">BACK</text>
</g>
<!-- stereo -->
<rect x="73.5" y="1076" width="37" height="36" rx="4" fill="#eef0f4" stroke="#a8a8a8" stroke-width="1"/>
<circle cx="85.5" cy="1093.5" r="6" fill="#4a70c8"/><circle cx="99" cy="1093.5" r="6" fill="#e84a90"/>

<!-- ========== RIGHT TOOLBAR ========== -->
<g fill="#8a8a8a">
<circle cx="1865" cy="140.5" r="1.1"/><circle cx="1872.2" cy="140.5" r="1.1"/><circle cx="1879.4" cy="140.5" r="1.1"/><circle cx="1886.6" cy="140.5" r="1.1"/><circle cx="1893.8" cy="140.5" r="1.1"/><circle cx="1901" cy="140.5" r="1.1"/><circle cx="1908.2" cy="140.5" r="1.1"/><circle cx="1915.4" cy="140.5" r="1.1"/><circle cx="1922.6" cy="140.5" r="1.1"/>
<circle cx="1865" cy="314.5" r="1.1"/><circle cx="1872.2" cy="314.5" r="1.1"/><circle cx="1879.4" cy="314.5" r="1.1"/><circle cx="1886.6" cy="314.5" r="1.1"/><circle cx="1893.8" cy="314.5" r="1.1"/><circle cx="1901" cy="314.5" r="1.1"/><circle cx="1908.2" cy="314.5" r="1.1"/><circle cx="1915.4" cy="314.5" r="1.1"/><circle cx="1922.6" cy="314.5" r="1.1"/>
</g>
<circle cx="1894" cy="169" r="15" fill="none" stroke="#a05860" stroke-width="6.5"/>
<circle cx="1894" cy="169" r="15" fill="none" stroke="#e47c84" stroke-width="4.5"/>
<path d="M1883,179 L1905,159" stroke="#a05860" stroke-width="6.5"/>
<path d="M1883,179 L1905,159" stroke="#e47c84" stroke-width="4.5"/>
<!-- EDL -->
<rect x="1882" y="212" width="24.5" height="24.5" fill="#7e7e7e"/>
<path d="M1890,228 Q1888,220 1894,216 Q1900,214 1903,220 Q1904,227 1899,230 Z" fill="#a0a0a0"/>
<text x="1883" y="235" font-size="8" font-weight="bold" fill="#fff">EDL</text>
<!-- SSAO -->
<rect x="1882" y="266" width="24.5" height="24.5" fill="#7e7e7e"/>
<path d="M1890,282 Q1888,274 1894,270 Q1900,268 1903,274 Q1904,281 1899,284 Z" fill="#a0a0a0"/>
<text x="1883" y="289.5" font-size="7" font-weight="bold" fill="#fff" letter-spacing="0.3">SSAO</text>
<!-- clapper -->
<path d="M1876,330 L1910,326 L1911,337 L1877,340 Z" fill="#333"/>
<path d="M1880,339 L1884,328 M1887,338 L1891,327 M1894,337 L1898,327 M1901,337 L1905,326" stroke="#eee" stroke-width="2.5"/>
<rect x="1876.5" y="340" width="34" height="20.5" fill="url(#iClap)" stroke="#5a6a8a" stroke-width="1"/>
<!-- brush -->
<rect x="1892" y="378" width="3.5" height="22" fill="#d8b88a" stroke="#b89868" stroke-width="0.6"/>
<path d="M1887,399 L1901,398 L1902,414 L1888,415 L1885,410 Z" fill="#dcbc8c" stroke="#b89868" stroke-width="0.8"/>
<!-- compass -->
<rect x="1880.5" y="438" width="27.5" height="27.5" rx="3" fill="#f2f2f2" stroke="#8a8a8a" stroke-width="1.8"/>
<circle cx="1894" cy="451.7" r="11" fill="#fafafa" stroke="#999" stroke-width="1.6"/>
<path d="M1901,444 L1895,453 L1893,451 Z" fill="#e05050"/><path d="M1887,460 L1893,451 L1895,453 Z" fill="#444"/>
<text x="1893.8" y="499" text-anchor="middle" font-size="12" fill="#b8b8b8">CSF Filter</text>
<!-- N -->
<path d="M1888,526.5 H1897 M1894,523.5 L1898,526.5 L1894,529.5" stroke="#5a5aa0" stroke-width="1.4" fill="none"/>
<text x="1886.5" y="548.5" font-size="18" fill="#6a6aa8">N</text>
<!-- HPR -->
<rect x="1882" y="580" width="25" height="24" fill="#f0f0f0"/>
<path d="M1886,594 Q1884,585 1892,583 L1900,583 Q1905,588 1903,595 L1898,599 L1889,598 Z" fill="#a8a8a8"/>
<text x="1884" y="603" font-size="6.5" font-weight="bold" fill="#333">HPR</text>
<!-- M3C2 -->
<text x="1875.5" y="638" font-size="11" font-weight="bold" fill="#88b0e0" letter-spacing="-0.6">M3C2</text>
<path d="M1876,652 L1904,641 Q1910,641 1909,647 L1882,662 Q1875,664 1876,656 Z" fill="#f0f070" stroke="#b8b040" stroke-width="1"/>
<g fill="#333"><circle cx="1881" cy="649" r="1.1"/><circle cx="1879" cy="654" r="1.1"/><circle cx="1886" cy="655" r="1.1"/><circle cx="1888" cy="660" r="1.1"/><circle cx="1883" cy="663" r="1.1"/><circle cx="1899" cy="642" r="1.1"/><circle cx="1902" cy="648" r="1.1"/><circle cx="1906" cy="652" r="1.1"/><circle cx="1908" cy="657" r="1.1"/><circle cx="1893" cy="650" r="1.1"/></g>
<!-- PCV -->
<rect x="1882" y="689" width="25" height="24" fill="#8a8a8a"/>
<path d="M1884,695 Q1894,688 1905,697 M1886,700 Q1894,692 1903,701" stroke="#c0c0c0" stroke-width="1.5" fill="none"/>
<text x="1883" y="712" font-size="8" font-weight="bold" fill="#fff" letter-spacing="0.6">PCV</text>
<!-- green -->
<rect x="1882" y="744" width="24" height="23" fill="#f2f2f2"/>
<path d="M1894,745 L1905,751 L1905,761 L1894,766 L1883,761 L1883,751 Z" fill="#80a070" stroke="#a08870" stroke-width="0.8"/>


<!-- ========== DB TREE ========== -->
<path d="M138.5,180 L152.5,180 L145.5,189.5 Z" fill="#5a4640"/>
<path d="M162,205.5 L176,205.5 L169,215 Z" fill="#5a4640"/>
<g fill="#f6f6f6" stroke="#e2e2e2" stroke-width="1">
<rect x="166.5" y="177" width="15.5" height="15" rx="3"/>
<rect x="190.5" y="203" width="15.5" height="15" rx="3"/>
<rect x="213.5" y="229" width="15.5" height="15" rx="3"/>
<rect x="213.5" y="255" width="15.5" height="15" rx="3"/>
<rect x="213.5" y="281" width="15.5" height="15" rx="3"/>
</g>
<g stroke="#a8a8a8" stroke-width="1.6" fill="none">
<path d="M169.5,184.5 L173,188.5 L179,179.5"/>
<path d="M193.5,210.5 L197,214.5 L203,205.5"/>
<path d="M216.5,236.5 L220,240.5 L226,231.5"/>
<path d="M216.5,262.5 L220,266.5 L226,257.5"/>
</g>
<path d="M192.5,224 V288.5 H205 M192.5,235.5 H205 M192.5,261.8 H205" stroke="#aaaaaa" stroke-width="1.2" fill="none"/>
<!-- folder icon -->
<path d="M198.5,179 L205,178 L207,180 L213,181 L214,192 L199,190 Z" fill="#e8cf7a" stroke="#d8bc60" stroke-width="0.8"/>
<!-- mesh icon -->
<path d="M231,202 L239,208 L236.5,217 L225.5,217 L222.5,208 Z" fill="#f0c8a8" stroke="#d08050" stroke-width="1"/>
<path d="M231,202 L229,217 M222.5,208 L236.5,217 M239,208 L225.5,217" stroke="#d08050" stroke-width="0.7"/>
<!-- normals icon -->
<rect x="247.5" y="228.5" width="14" height="16" fill="#e8e8e8" stroke="#b0b0b0" stroke-width="0.8"/>
<path d="M249,232 H260 M249,236 H260 M249,240 H256" stroke="#b8b8b8" stroke-width="1.5"/>
<!-- materials icon -->
<circle cx="254.5" cy="262" r="7.5" fill="#d0d0d0"/>
<g fill="#6a6a6a"><rect x="248" y="256" width="3" height="3"/><rect x="254" y="256" width="3" height="3"/><rect x="251" y="259" width="3" height="3"/><rect x="257" y="259" width="3" height="3"/><rect x="248" y="262" width="3" height="3"/><rect x="254" y="262" width="3" height="3"/><rect x="251" y="265" width="3" height="3"/><rect x="257" y="265" width="3" height="3"/></g>
<!-- vertices icon -->
<ellipse cx="254.5" cy="289" rx="8.5" ry="5.5" fill="#eeeeee" stroke="#8a8a8a" stroke-width="1.1"/>
<path d="M249,288 Q254,284 260,287" stroke="#c8c8c8" stroke-width="1" fill="none"/>

<!-- ========== LABEL ========== -->
<line x1="1223" y1="317" x2="1223" y2="353" stroke="#d82024" stroke-width="2.2"/>
<rect x="1093.5" y="260.5" width="149.5" height="56" fill="#dfe2ea" stroke="#cc1e30" stroke-width="2.2"/>
<rect x="1095" y="262" width="146.5" height="53" fill="none" stroke="#f0b8c0" stroke-width="0.8"/>
<g font-size="9.6" fill="#222">
<text x="1096" y="270.8">Distance: 1.797702</text>
</g>
<rect x="1096.3" y="275.2" width="17.7" height="12.7" fill="#e8141c"/>
<rect x="1096.3" y="287.9" width="17.7" height="12.6" fill="#18b818"/>
<rect x="1096.3" y="300.5" width="17.7" height="12.7" fill="#0a10d8"/>
<rect x="1169" y="275.2" width="23.6" height="12.7" fill="#e8141c"/>
<rect x="1169" y="287.9" width="23.6" height="12.6" fill="#18b818"/>
<rect x="1169" y="300.5" width="23.6" height="12.7" fill="#0a10d8"/>
<g font-size="9.6" fill="#fff">
<text x="1098" y="285">ΔX</text><text x="1098" y="297.7">ΔY</text><text x="1098" y="310.3">ΔZ</text>
<text x="1170.5" y="285">ΔXY</text><text x="1170.5" y="297.7">ΔXZ</text><text x="1170.5" y="310.3">ΔZY</text>
</g>
<g font-size="9.6" fill="#333" text-anchor="end">
<text x="1165" y="285">-0.008456</text><text x="1165" y="297.7">-1.797660</text><text x="1165" y="310.3">0.009021</text>
<text x="1237.5" y="285">1.797680</text><text x="1237.5" y="297.7">0.012365</text><text x="1237.5" y="310.3">1.797682</text>
</g>

<!-- ========== SCALE ========== -->
<path d="M1500.5,1374.5 H1813.5 M1500.5,1372 V1377 M1813.5,1372 V1377" stroke="#dcdcdc" stroke-width="1"/>
<text x="1656.5" y="1386.5" text-anchor="middle" font-size="12" fill="#f0f0f0" stroke="#f0f0f0" stroke-width="0.2">0.75</text>
<path d="M1819,1374.8 H1834.5" stroke="#2a9a3a" stroke-width="1.4"/>
<path d="M1834,1359.5 V1375" stroke="#3a6ab8" stroke-width="1.4"/>
</svg>

</div>
</body></html>
